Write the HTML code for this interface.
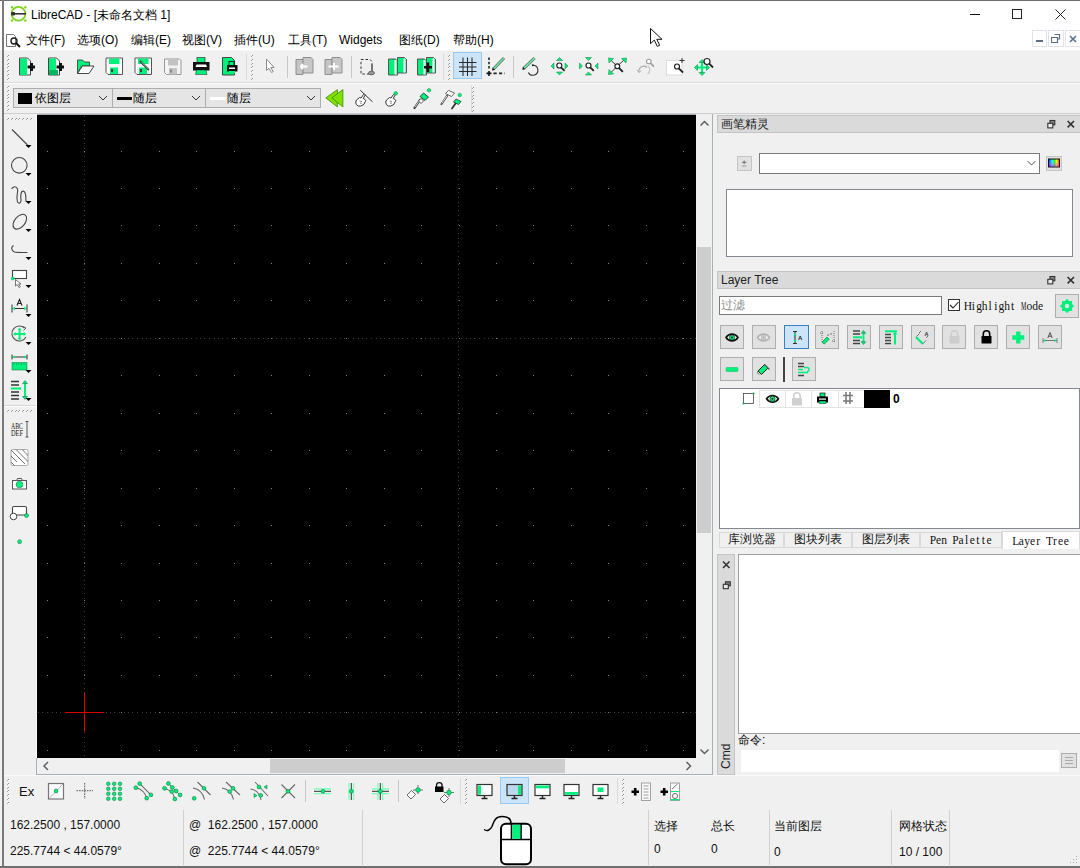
<!DOCTYPE html><html><head><meta charset="utf-8"><style>
*{margin:0;padding:0;box-sizing:border-box}
html,body{width:1080px;height:868px;overflow:hidden}
body{background:#f0f0f0;font-family:"Liberation Sans",sans-serif;font-size:12px;color:#000;position:relative}
.a{position:absolute;display:block}
.t{position:absolute;white-space:nowrap;line-height:16px}
</style></head><body>
<div class="a" style="left:0px;top:0px;width:1080px;height:50px;background:#fff"></div>
<div class="a" style="left:0px;top:0px;width:1080px;height:1px;background:#6e6e6e"></div>
<div class="a" style="left:2px;top:0px;width:2px;height:868px;background:#7a7a7a"></div>
<div class="a" style="left:0px;top:866px;width:1080px;height:2px;background:#6f6f6f"></div>
<svg class="a" style="left:9px;top:5px;" width="20" height="18" viewBox="0 0 20 18"><circle cx="9.5" cy="8.7" r="6.9" fill="none" stroke="#7ed321" stroke-width="1.8"/><circle cx="3" cy="2.3" r="1.2" fill="#7ed321"/><circle cx="16.3" cy="2.3" r="1.2" fill="#7ed321"/><circle cx="3" cy="15.5" r="1.2" fill="#7ed321"/><circle cx="16.3" cy="15.5" r="1.2" fill="#7ed321"/><rect x="2" y="8" width="15" height="1.6" fill="#333"/><rect x="2" y="7" width="4" height="3.6" rx="0.8" fill="#333"/></svg>
<div class="t" style="left:31px;top:7px;font-size:12px">LibreCAD - [未命名文档 1]</div>
<div class="a" style="left:970px;top:14px;width:10px;height:1px;background:#111"></div>
<div class="a" style="left:1012px;top:9px;width:10px;height:10px;border:1px solid #222"></div>
<svg class="a" style="left:1055px;top:9px;" width="11" height="11" viewBox="0 0 11 11"><path d="M0.5 0.5L10.5 10.5M10.5 0.5L0.5 10.5" stroke="#222" stroke-width="1"/></svg>
<svg class="a" style="left:5px;top:33px;" width="18" height="15" viewBox="0 0 18 15"><path d="M1.5 1.5h7l2 2v10h-9z" fill="#fff" stroke="#777"/><circle cx="9" cy="8" r="3" fill="none" stroke="#222" stroke-width="1.4"/><path d="M11 10l4 4" stroke="#111" stroke-width="2"/></svg>
<div class="t" style="left:26px;top:32px;font-size:12px">文件(F)</div>
<div class="t" style="left:77px;top:32px;font-size:12px">选项(O)</div>
<div class="t" style="left:131px;top:32px;font-size:12px">编辑(E)</div>
<div class="t" style="left:182px;top:32px;font-size:12px">视图(V)</div>
<div class="t" style="left:234px;top:32px;font-size:12px">插件(U)</div>
<div class="t" style="left:288px;top:32px;font-size:12px">工具(T)</div>
<div class="t" style="left:339px;top:32px;font-size:12px">Widgets</div>
<div class="t" style="left:399px;top:32px;font-size:12px">图纸(D)</div>
<div class="t" style="left:453px;top:32px;font-size:12px">帮助(H)</div>
<div class="a" style="left:1032px;top:30px;width:15px;height:17px;border:1px solid #dfe3ea;background:#fff"></div>
<div class="a" style="left:1048px;top:30px;width:16px;height:17px;border:1px solid #dfe3ea;background:#fff"></div>
<div class="a" style="left:1065px;top:30px;width:16px;height:17px;border:1px solid #dfe3ea;background:#fff"></div>
<div class="a" style="left:1036px;top:40px;width:7px;height:2px;background:#5d6f88"></div>
<svg class="a" style="left:1051px;top:34px;" width="10" height="9" viewBox="0 0 10 9"><path d="M3.5 0.5h5v4.5h-2M0.5 3.5h6v5h-6z" fill="none" stroke="#5d6f88" stroke-width="1.2"/></svg>
<svg class="a" style="left:1069px;top:35px;" width="8" height="8" viewBox="0 0 8 8"><path d="M1 1L7 7M7 1L1 7" stroke="#5d6f88" stroke-width="1.6"/></svg>
<svg class="a" style="left:649px;top:27px;" width="16" height="22" viewBox="0 0 16 22"><path d="M1.5 1.5v15.2l3.8-3.6 3 6.3 2.4-1.1-2.9-6h5.2z" fill="#fff" stroke="#111" stroke-width="1"/></svg>
<div class="a" style="left:4px;top:50px;width:1076px;height:1px;background:#f7f7f7"></div>
<div class="a" style="left:4px;top:82px;width:1076px;height:1px;background:#dcdcdc"></div>
<div class="a" style="left:4px;top:83px;width:1076px;height:1px;background:#fbfbfb"></div>
<div class="a" style="left:4px;top:113px;width:1076px;height:1px;background:#cdcdcd"></div>
<svg class="a" style="left:7px;top:55px;" width="3" height="25" viewBox="0 0 3 25"><rect x="1" y="0" width="1" height="1" fill="#8c8c8c"/><rect x="0" y="1" width="1" height="1" fill="#a5a5a5"/><rect x="1" y="1" width="1" height="1" fill="#fff"/><rect x="1" y="4" width="1" height="1" fill="#8c8c8c"/><rect x="0" y="5" width="1" height="1" fill="#a5a5a5"/><rect x="1" y="5" width="1" height="1" fill="#fff"/><rect x="1" y="8" width="1" height="1" fill="#8c8c8c"/><rect x="0" y="9" width="1" height="1" fill="#a5a5a5"/><rect x="1" y="9" width="1" height="1" fill="#fff"/><rect x="1" y="11" width="1" height="1" fill="#8c8c8c"/><rect x="0" y="12" width="1" height="1" fill="#a5a5a5"/><rect x="1" y="12" width="1" height="1" fill="#fff"/><rect x="1" y="15" width="1" height="1" fill="#8c8c8c"/><rect x="0" y="16" width="1" height="1" fill="#a5a5a5"/><rect x="1" y="16" width="1" height="1" fill="#fff"/><rect x="1" y="19" width="1" height="1" fill="#8c8c8c"/><rect x="0" y="20" width="1" height="1" fill="#a5a5a5"/><rect x="1" y="20" width="1" height="1" fill="#fff"/><rect x="1" y="23" width="1" height="1" fill="#8c8c8c"/><rect x="0" y="24" width="1" height="1" fill="#a5a5a5"/><rect x="1" y="24" width="1" height="1" fill="#fff"/></svg>
<div class="a" style="left:246px;top:54px;width:1px;height:26px;background:#dadada"></div>
<svg class="a" style="left:251px;top:55px;" width="3" height="26" viewBox="0 0 3 26"><rect x="1" y="0" width="1" height="1" fill="#8c8c8c"/><rect x="0" y="1" width="1" height="1" fill="#a5a5a5"/><rect x="1" y="1" width="1" height="1" fill="#fff"/><rect x="1" y="4" width="1" height="1" fill="#8c8c8c"/><rect x="0" y="5" width="1" height="1" fill="#a5a5a5"/><rect x="1" y="5" width="1" height="1" fill="#fff"/><rect x="1" y="8" width="1" height="1" fill="#8c8c8c"/><rect x="0" y="9" width="1" height="1" fill="#a5a5a5"/><rect x="1" y="9" width="1" height="1" fill="#fff"/><rect x="1" y="11" width="1" height="1" fill="#8c8c8c"/><rect x="0" y="12" width="1" height="1" fill="#a5a5a5"/><rect x="1" y="12" width="1" height="1" fill="#fff"/><rect x="1" y="15" width="1" height="1" fill="#8c8c8c"/><rect x="0" y="16" width="1" height="1" fill="#a5a5a5"/><rect x="1" y="16" width="1" height="1" fill="#fff"/><rect x="1" y="19" width="1" height="1" fill="#8c8c8c"/><rect x="0" y="20" width="1" height="1" fill="#a5a5a5"/><rect x="1" y="20" width="1" height="1" fill="#fff"/><rect x="1" y="23" width="1" height="1" fill="#8c8c8c"/><rect x="0" y="24" width="1" height="1" fill="#a5a5a5"/><rect x="1" y="24" width="1" height="1" fill="#fff"/></svg>
<div class="a" style="left:443px;top:54px;width:1px;height:26px;background:#dadada"></div>
<svg class="a" style="left:448px;top:55px;" width="3" height="26" viewBox="0 0 3 26"><rect x="1" y="0" width="1" height="1" fill="#8c8c8c"/><rect x="0" y="1" width="1" height="1" fill="#a5a5a5"/><rect x="1" y="1" width="1" height="1" fill="#fff"/><rect x="1" y="4" width="1" height="1" fill="#8c8c8c"/><rect x="0" y="5" width="1" height="1" fill="#a5a5a5"/><rect x="1" y="5" width="1" height="1" fill="#fff"/><rect x="1" y="8" width="1" height="1" fill="#8c8c8c"/><rect x="0" y="9" width="1" height="1" fill="#a5a5a5"/><rect x="1" y="9" width="1" height="1" fill="#fff"/><rect x="1" y="11" width="1" height="1" fill="#8c8c8c"/><rect x="0" y="12" width="1" height="1" fill="#a5a5a5"/><rect x="1" y="12" width="1" height="1" fill="#fff"/><rect x="1" y="15" width="1" height="1" fill="#8c8c8c"/><rect x="0" y="16" width="1" height="1" fill="#a5a5a5"/><rect x="1" y="16" width="1" height="1" fill="#fff"/><rect x="1" y="19" width="1" height="1" fill="#8c8c8c"/><rect x="0" y="20" width="1" height="1" fill="#a5a5a5"/><rect x="1" y="20" width="1" height="1" fill="#fff"/><rect x="1" y="23" width="1" height="1" fill="#8c8c8c"/><rect x="0" y="24" width="1" height="1" fill="#a5a5a5"/><rect x="1" y="24" width="1" height="1" fill="#fff"/></svg>
<div class="a" style="left:287px;top:56px;width:1px;height:22px;background:#c8c8c8"></div>
<div class="a" style="left:351px;top:56px;width:1px;height:22px;background:#c8c8c8"></div>
<div class="a" style="left:513px;top:56px;width:1px;height:22px;background:#c8c8c8"></div>
<div class="a" style="left:453px;top:52px;width:29px;height:27px;background:#cce4f7;border:1px solid #99c9ef"></div>
<svg class="a" style="left:7px;top:86px;" width="3" height="25" viewBox="0 0 3 25"><rect x="1" y="0" width="1" height="1" fill="#8c8c8c"/><rect x="0" y="1" width="1" height="1" fill="#a5a5a5"/><rect x="1" y="1" width="1" height="1" fill="#fff"/><rect x="1" y="4" width="1" height="1" fill="#8c8c8c"/><rect x="0" y="5" width="1" height="1" fill="#a5a5a5"/><rect x="1" y="5" width="1" height="1" fill="#fff"/><rect x="1" y="8" width="1" height="1" fill="#8c8c8c"/><rect x="0" y="9" width="1" height="1" fill="#a5a5a5"/><rect x="1" y="9" width="1" height="1" fill="#fff"/><rect x="1" y="11" width="1" height="1" fill="#8c8c8c"/><rect x="0" y="12" width="1" height="1" fill="#a5a5a5"/><rect x="1" y="12" width="1" height="1" fill="#fff"/><rect x="1" y="15" width="1" height="1" fill="#8c8c8c"/><rect x="0" y="16" width="1" height="1" fill="#a5a5a5"/><rect x="1" y="16" width="1" height="1" fill="#fff"/><rect x="1" y="19" width="1" height="1" fill="#8c8c8c"/><rect x="0" y="20" width="1" height="1" fill="#a5a5a5"/><rect x="1" y="20" width="1" height="1" fill="#fff"/><rect x="1" y="23" width="1" height="1" fill="#8c8c8c"/><rect x="0" y="24" width="1" height="1" fill="#a5a5a5"/><rect x="1" y="24" width="1" height="1" fill="#fff"/></svg>
<div class="a" style="left:471px;top:85px;width:1px;height:27px;background:#dadada"></div>
<svg class="a" style="left:472px;top:87px;" width="3" height="26" viewBox="0 0 3 26"><rect x="1" y="0" width="1" height="1" fill="#8c8c8c"/><rect x="0" y="1" width="1" height="1" fill="#a5a5a5"/><rect x="1" y="1" width="1" height="1" fill="#fff"/><rect x="1" y="4" width="1" height="1" fill="#8c8c8c"/><rect x="0" y="5" width="1" height="1" fill="#a5a5a5"/><rect x="1" y="5" width="1" height="1" fill="#fff"/><rect x="1" y="8" width="1" height="1" fill="#8c8c8c"/><rect x="0" y="9" width="1" height="1" fill="#a5a5a5"/><rect x="1" y="9" width="1" height="1" fill="#fff"/><rect x="1" y="11" width="1" height="1" fill="#8c8c8c"/><rect x="0" y="12" width="1" height="1" fill="#a5a5a5"/><rect x="1" y="12" width="1" height="1" fill="#fff"/><rect x="1" y="15" width="1" height="1" fill="#8c8c8c"/><rect x="0" y="16" width="1" height="1" fill="#a5a5a5"/><rect x="1" y="16" width="1" height="1" fill="#fff"/><rect x="1" y="19" width="1" height="1" fill="#8c8c8c"/><rect x="0" y="20" width="1" height="1" fill="#a5a5a5"/><rect x="1" y="20" width="1" height="1" fill="#fff"/><rect x="1" y="23" width="1" height="1" fill="#8c8c8c"/><rect x="0" y="24" width="1" height="1" fill="#a5a5a5"/><rect x="1" y="24" width="1" height="1" fill="#fff"/></svg>
<div class="a" style="left:13px;top:88px;width:100px;height:20px;background:#e5e5e5;border:1px solid #adadad"></div>
<div class="a" style="left:112px;top:88px;width:94px;height:20px;background:#e5e5e5;border:1px solid #adadad"></div>
<div class="a" style="left:205px;top:88px;width:116px;height:20px;background:#e5e5e5;border:1px solid #adadad"></div>
<div class="a" style="left:18px;top:93px;width:14px;height:11px;background:#000"></div>
<div class="t" style="left:35px;top:89px;font-size:12px;line-height:18px">依图层</div>
<div class="a" style="left:117px;top:97px;width:15px;height:3px;background:#000"></div>
<div class="t" style="left:133px;top:89px;font-size:12px;line-height:18px">随层</div>
<div class="a" style="left:210px;top:97px;width:16px;height:3px;background:#fff"></div>
<div class="t" style="left:227px;top:89px;font-size:12px;line-height:18px">随层</div>
<div class="a" style="left:4px;top:114px;width:33px;height:644px;background:#f0f0f0"></div>
<div class="a" style="left:36px;top:114px;width:1px;height:644px;background:#fbfbfb"></div>
<svg class="a" style="left:7px;top:118px;" width="25" height="3" viewBox="0 0 25 3"><rect x="1" y="0" width="1" height="1" fill="#8c8c8c"/><rect x="0" y="1" width="1" height="1" fill="#a5a5a5"/><rect x="1" y="1" width="1" height="1" fill="#fff"/><rect x="5" y="0" width="1" height="1" fill="#8c8c8c"/><rect x="4" y="1" width="1" height="1" fill="#a5a5a5"/><rect x="5" y="1" width="1" height="1" fill="#fff"/><rect x="9" y="0" width="1" height="1" fill="#8c8c8c"/><rect x="8" y="1" width="1" height="1" fill="#a5a5a5"/><rect x="9" y="1" width="1" height="1" fill="#fff"/><rect x="12" y="0" width="1" height="1" fill="#8c8c8c"/><rect x="11" y="1" width="1" height="1" fill="#a5a5a5"/><rect x="12" y="1" width="1" height="1" fill="#fff"/><rect x="16" y="0" width="1" height="1" fill="#8c8c8c"/><rect x="15" y="1" width="1" height="1" fill="#a5a5a5"/><rect x="16" y="1" width="1" height="1" fill="#fff"/><rect x="20" y="0" width="1" height="1" fill="#8c8c8c"/><rect x="19" y="1" width="1" height="1" fill="#a5a5a5"/><rect x="20" y="1" width="1" height="1" fill="#fff"/><rect x="24" y="0" width="1" height="1" fill="#8c8c8c"/><rect x="23" y="1" width="1" height="1" fill="#a5a5a5"/><rect x="24" y="1" width="1" height="1" fill="#fff"/></svg>
<div class="a" style="left:4px;top:405px;width:32px;height:1px;background:#d5d5d5"></div>
<div class="a" style="left:4px;top:406px;width:32px;height:1px;background:#fff"></div>
<svg class="a" style="left:7px;top:410px;" width="25" height="3" viewBox="0 0 25 3"><rect x="1" y="0" width="1" height="1" fill="#8c8c8c"/><rect x="0" y="1" width="1" height="1" fill="#a5a5a5"/><rect x="1" y="1" width="1" height="1" fill="#fff"/><rect x="5" y="0" width="1" height="1" fill="#8c8c8c"/><rect x="4" y="1" width="1" height="1" fill="#a5a5a5"/><rect x="5" y="1" width="1" height="1" fill="#fff"/><rect x="9" y="0" width="1" height="1" fill="#8c8c8c"/><rect x="8" y="1" width="1" height="1" fill="#a5a5a5"/><rect x="9" y="1" width="1" height="1" fill="#fff"/><rect x="12" y="0" width="1" height="1" fill="#8c8c8c"/><rect x="11" y="1" width="1" height="1" fill="#a5a5a5"/><rect x="12" y="1" width="1" height="1" fill="#fff"/><rect x="16" y="0" width="1" height="1" fill="#8c8c8c"/><rect x="15" y="1" width="1" height="1" fill="#a5a5a5"/><rect x="16" y="1" width="1" height="1" fill="#fff"/><rect x="20" y="0" width="1" height="1" fill="#8c8c8c"/><rect x="19" y="1" width="1" height="1" fill="#a5a5a5"/><rect x="20" y="1" width="1" height="1" fill="#fff"/><rect x="24" y="0" width="1" height="1" fill="#8c8c8c"/><rect x="23" y="1" width="1" height="1" fill="#a5a5a5"/><rect x="24" y="1" width="1" height="1" fill="#fff"/></svg>
<div class="a" style="left:37px;top:114px;width:676px;height:1px;background:#a9afb8"></div>
<div class="a" style="left:37px;top:115px;width:659px;height:643px;background:#000"></div>
<div class="a" style="left:696px;top:114px;width:16px;height:644px;background:#f0f0f0"></div>
<div class="a" style="left:697px;top:247px;width:14px;height:286px;background:#cdcdcd"></div>
<div class="a" style="left:37px;top:758px;width:675px;height:16px;background:#f0f0f0"></div>
<div class="a" style="left:270px;top:759px;width:295px;height:14px;background:#cdcdcd"></div>
<div class="a" style="left:712px;top:114px;width:1px;height:661px;background:#a9afb8"></div>
<div class="a" style="left:36px;top:774px;width:677px;height:1px;background:#a9afb8"></div>
<div class="a" style="left:36px;top:758px;width:1px;height:17px;background:#a9afb8"></div>
<div class="a" style="left:4px;top:775px;width:1076px;height:1px;background:#fafafa"></div>
<svg class="a" style="left:7px;top:779px;" width="3" height="27" viewBox="0 0 3 27"><rect x="1" y="0" width="1" height="1" fill="#8c8c8c"/><rect x="0" y="1" width="1" height="1" fill="#a5a5a5"/><rect x="1" y="1" width="1" height="1" fill="#fff"/><rect x="1" y="4" width="1" height="1" fill="#8c8c8c"/><rect x="0" y="5" width="1" height="1" fill="#a5a5a5"/><rect x="1" y="5" width="1" height="1" fill="#fff"/><rect x="1" y="8" width="1" height="1" fill="#8c8c8c"/><rect x="0" y="9" width="1" height="1" fill="#a5a5a5"/><rect x="1" y="9" width="1" height="1" fill="#fff"/><rect x="1" y="11" width="1" height="1" fill="#8c8c8c"/><rect x="0" y="12" width="1" height="1" fill="#a5a5a5"/><rect x="1" y="12" width="1" height="1" fill="#fff"/><rect x="1" y="15" width="1" height="1" fill="#8c8c8c"/><rect x="0" y="16" width="1" height="1" fill="#a5a5a5"/><rect x="1" y="16" width="1" height="1" fill="#fff"/><rect x="1" y="19" width="1" height="1" fill="#8c8c8c"/><rect x="0" y="20" width="1" height="1" fill="#a5a5a5"/><rect x="1" y="20" width="1" height="1" fill="#fff"/><rect x="1" y="23" width="1" height="1" fill="#8c8c8c"/><rect x="0" y="24" width="1" height="1" fill="#a5a5a5"/><rect x="1" y="24" width="1" height="1" fill="#fff"/></svg>
<div class="t" style="left:19px;top:783px;font-size:13px;line-height:18px;color:#111">Ex</div>
<div class="a" style="left:305px;top:780px;width:1px;height:22px;background:#c8c8c8"></div>
<div class="a" style="left:398px;top:780px;width:1px;height:22px;background:#c8c8c8"></div>
<div class="a" style="left:460px;top:778px;width:1px;height:26px;background:#dadada"></div>
<svg class="a" style="left:465px;top:779px;" width="3" height="27" viewBox="0 0 3 27"><rect x="1" y="0" width="1" height="1" fill="#8c8c8c"/><rect x="0" y="1" width="1" height="1" fill="#a5a5a5"/><rect x="1" y="1" width="1" height="1" fill="#fff"/><rect x="1" y="4" width="1" height="1" fill="#8c8c8c"/><rect x="0" y="5" width="1" height="1" fill="#a5a5a5"/><rect x="1" y="5" width="1" height="1" fill="#fff"/><rect x="1" y="8" width="1" height="1" fill="#8c8c8c"/><rect x="0" y="9" width="1" height="1" fill="#a5a5a5"/><rect x="1" y="9" width="1" height="1" fill="#fff"/><rect x="1" y="11" width="1" height="1" fill="#8c8c8c"/><rect x="0" y="12" width="1" height="1" fill="#a5a5a5"/><rect x="1" y="12" width="1" height="1" fill="#fff"/><rect x="1" y="15" width="1" height="1" fill="#8c8c8c"/><rect x="0" y="16" width="1" height="1" fill="#a5a5a5"/><rect x="1" y="16" width="1" height="1" fill="#fff"/><rect x="1" y="19" width="1" height="1" fill="#8c8c8c"/><rect x="0" y="20" width="1" height="1" fill="#a5a5a5"/><rect x="1" y="20" width="1" height="1" fill="#fff"/><rect x="1" y="23" width="1" height="1" fill="#8c8c8c"/><rect x="0" y="24" width="1" height="1" fill="#a5a5a5"/><rect x="1" y="24" width="1" height="1" fill="#fff"/></svg>
<div class="a" style="left:500px;top:777px;width:29px;height:27px;background:#cce4f7;border:1px solid #99c9ef"></div>
<div class="a" style="left:617px;top:778px;width:1px;height:26px;background:#dadada"></div>
<svg class="a" style="left:622px;top:779px;" width="3" height="27" viewBox="0 0 3 27"><rect x="1" y="0" width="1" height="1" fill="#8c8c8c"/><rect x="0" y="1" width="1" height="1" fill="#a5a5a5"/><rect x="1" y="1" width="1" height="1" fill="#fff"/><rect x="1" y="4" width="1" height="1" fill="#8c8c8c"/><rect x="0" y="5" width="1" height="1" fill="#a5a5a5"/><rect x="1" y="5" width="1" height="1" fill="#fff"/><rect x="1" y="8" width="1" height="1" fill="#8c8c8c"/><rect x="0" y="9" width="1" height="1" fill="#a5a5a5"/><rect x="1" y="9" width="1" height="1" fill="#fff"/><rect x="1" y="11" width="1" height="1" fill="#8c8c8c"/><rect x="0" y="12" width="1" height="1" fill="#a5a5a5"/><rect x="1" y="12" width="1" height="1" fill="#fff"/><rect x="1" y="15" width="1" height="1" fill="#8c8c8c"/><rect x="0" y="16" width="1" height="1" fill="#a5a5a5"/><rect x="1" y="16" width="1" height="1" fill="#fff"/><rect x="1" y="19" width="1" height="1" fill="#8c8c8c"/><rect x="0" y="20" width="1" height="1" fill="#a5a5a5"/><rect x="1" y="20" width="1" height="1" fill="#fff"/><rect x="1" y="23" width="1" height="1" fill="#8c8c8c"/><rect x="0" y="24" width="1" height="1" fill="#a5a5a5"/><rect x="1" y="24" width="1" height="1" fill="#fff"/></svg>
<div class="t" style="left:10px;top:817px;font-size:12px;line-height:16px;color:#111">162.2500 , 157.0000</div>
<div class="t" style="left:10px;top:843px;font-size:12px;line-height:16px;color:#111">225.7744 &lt; 44.0579°</div>
<div class="a" style="left:183px;top:810px;width:1px;height:55px;background:#d0d0d0"></div>
<div class="t" style="left:189px;top:817px;font-size:12px;line-height:16px;color:#111">@&nbsp; 162.2500 , 157.0000</div>
<div class="t" style="left:189px;top:843px;font-size:12px;line-height:16px;color:#111">@&nbsp; 225.7744 &lt; 44.0579°</div>
<div class="a" style="left:362px;top:810px;width:1px;height:55px;background:#d0d0d0"></div>
<div class="a" style="left:648px;top:810px;width:1px;height:55px;background:#d0d0d0"></div>
<div class="a" style="left:769px;top:810px;width:1px;height:55px;background:#d0d0d0"></div>
<div class="a" style="left:891px;top:810px;width:1px;height:55px;background:#d0d0d0"></div>
<div class="a" style="left:949px;top:810px;width:1px;height:55px;background:#d0d0d0"></div>
<div class="t" style="left:654px;top:818px;font-size:12px;line-height:16px;color:#111">选择</div>
<div class="t" style="left:654px;top:841px;font-size:12px;line-height:16px;color:#111">0</div>
<div class="t" style="left:711px;top:818px;font-size:12px;line-height:16px;color:#111">总长</div>
<div class="t" style="left:711px;top:841px;font-size:12px;line-height:16px;color:#111">0</div>
<div class="t" style="left:774px;top:818px;font-size:12px;line-height:16px;color:#111">当前图层</div>
<div class="t" style="left:774px;top:844px;font-size:12px;line-height:16px;color:#111">0</div>
<div class="t" style="left:899px;top:818px;font-size:12px;line-height:16px;color:#111">网格状态</div>
<div class="t" style="left:899px;top:844px;font-size:12px;line-height:16px;color:#111">10 / 100</div>
<div class="a" style="left:717px;top:115px;width:363px;height:18px;background:#dadada;border:1px solid #c4c4c4;border-right:none"></div>
<div class="t" style="left:721px;top:116px;font-size:12px;line-height:16px;color:#222">画笔精灵</div>
<div class="a" style="left:737px;top:156px;width:15px;height:15px;background:#e1e1e1;border:1px solid #c4c4c4"></div>
<div class="a" style="left:759px;top:153px;width:281px;height:21px;background:#fff;border:1px solid #7a7a7a"></div>
<div class="a" style="left:1046px;top:156px;width:16px;height:15px;background:#e1e1e1;border:1px solid #c4c4c4"></div>
<div class="a" style="left:726px;top:189px;width:347px;height:68px;background:#fff;border:1px solid #828790"></div>
<div class="a" style="left:717px;top:271px;width:363px;height:18px;background:#dadada;border:1px solid #c4c4c4;border-right:none"></div>
<div class="t" style="left:721px;top:272px;font-size:12px;line-height:16px;color:#222">Layer Tree</div>
<div class="a" style="left:719px;top:296px;width:223px;height:19px;background:#fff;border:1px solid #7a7a7a"></div>
<div class="t" style="left:721px;top:298px;font-size:12px;line-height:15px;color:#8a8a8a">过滤</div>
<div class="a" style="left:948px;top:299px;width:12px;height:12px;background:#fff;border:1px solid #333"></div>
<div class="a" style="left:1055px;top:294px;width:24px;height:24px;background:#e1e1e1;border:1px solid #adadad"></div>
<div class="a" style="left:720px;top:325px;width:24px;height:24px;background:#e1e1e1;border:1px solid #adadad"></div>
<div class="a" style="left:752px;top:325px;width:24px;height:24px;background:#e1e1e1;border:1px solid #adadad"></div>
<div class="a" style="left:784px;top:325px;width:25px;height:24px;background:#cce4f7;border:1px solid #3d7fc4"></div>
<div class="a" style="left:815px;top:325px;width:24px;height:24px;background:#e1e1e1;border:1px solid #adadad"></div>
<div class="a" style="left:847px;top:325px;width:24px;height:24px;background:#e1e1e1;border:1px solid #adadad"></div>
<div class="a" style="left:879px;top:325px;width:24px;height:24px;background:#e1e1e1;border:1px solid #adadad"></div>
<div class="a" style="left:911px;top:325px;width:24px;height:24px;background:#e1e1e1;border:1px solid #adadad"></div>
<div class="a" style="left:942px;top:325px;width:24px;height:24px;background:#e1e1e1;border:1px solid #adadad"></div>
<div class="a" style="left:974px;top:325px;width:24px;height:24px;background:#e1e1e1;border:1px solid #adadad"></div>
<div class="a" style="left:1006px;top:325px;width:24px;height:24px;background:#e1e1e1;border:1px solid #adadad"></div>
<div class="a" style="left:1038px;top:325px;width:24px;height:24px;background:#e1e1e1;border:1px solid #adadad"></div>
<div class="a" style="left:720px;top:357px;width:24px;height:24px;background:#e1e1e1;border:1px solid #adadad"></div>
<div class="a" style="left:752px;top:357px;width:24px;height:24px;background:#e1e1e1;border:1px solid #adadad"></div>
<div class="a" style="left:792px;top:357px;width:24px;height:24px;background:#e1e1e1;border:1px solid #adadad"></div>
<div class="a" style="left:783px;top:357px;width:2px;height:25px;background:#444"></div>
<div class="a" style="left:719px;top:388px;width:361px;height:141px;background:#fff;border:1px solid #828790;border-right:1px solid #828790"></div>
<div class="a" style="left:759px;top:390px;width:105px;height:18px;border:1px solid #e3e3e3;border-right:none"></div>
<div class="a" style="left:785px;top:390px;width:1px;height:18px;background:#e3e3e3"></div>
<div class="a" style="left:811px;top:390px;width:1px;height:18px;background:#e3e3e3"></div>
<div class="a" style="left:838px;top:390px;width:1px;height:18px;background:#e3e3e3"></div>
<div class="a" style="left:864px;top:390px;width:26px;height:18px;background:#000"></div>
<div class="t" style="left:893px;top:391px;font-size:12px;line-height:16px;font-weight:bold">0</div>
<div class="a" style="left:719px;top:531px;width:361px;height:17px;background:#f0f0f0"></div>
<div class="a" style="left:719px;top:532px;width:65px;height:16px;background:#f0f0f0;border:1px solid #d9d9d9"></div>
<div class="t" style="left:719px;top:532px;font-size:12px;line-height:15px;color:#111;text-align:center;width:65px">库浏览器</div>
<div class="a" style="left:784px;top:532px;width:68px;height:16px;background:#f0f0f0;border:1px solid #d9d9d9"></div>
<div class="t" style="left:784px;top:532px;font-size:12px;line-height:15px;color:#111;text-align:center;width:68px">图块列表</div>
<div class="a" style="left:852px;top:532px;width:68px;height:16px;background:#f0f0f0;border:1px solid #d9d9d9"></div>
<div class="t" style="left:852px;top:532px;font-size:12px;line-height:15px;color:#111;text-align:center;width:68px">图层列表</div>
<div class="a" style="left:920px;top:532px;width:82px;height:16px;background:#f0f0f0;border:1px solid #d9d9d9"></div>
<div class="a" style="left:1002px;top:531px;width:78px;height:18px;background:#fff;border:1px solid #d9d9d9;border-bottom:none"></div>
<div class="a" style="left:717px;top:554px;width:18px;height:221px;background:#dadada;border:1px solid #c4c4c4"></div>
<div class="t" style="left:719px;top:769px;font-size:12px;line-height:14px;color:#222;transform:rotate(-90deg);transform-origin:0 0">Cmd</div>
<div class="a" style="left:738px;top:554px;width:342px;height:180px;background:#fff;border:1px solid #a0a0a0;border-right:none"></div>
<div class="t" style="left:738px;top:733px;font-size:12px;line-height:15px;color:#111">命令:</div>
<div class="a" style="left:741px;top:750px;width:318px;height:22px;background:#fff"></div>
<div class="a" style="left:1061px;top:753px;width:16px;height:15px;background:#e1e1e1;border:1px solid #adadad"></div>
<svg class="a" style="left:0;top:0;pointer-events:none" width="1080" height="868" viewBox="0 0 1080 868"><path d="M19.5 58h8l3 3v14h-11z" fill="#fff" stroke="#444" stroke-width="1"/><rect x="20" y="58.5" width="7" height="16.5" fill="#00f07c"/><path d="M27.5 65.5h7.5v3h-7.5zM30 63h3v8h-3z" fill="#111"/><path d="M48.5 58h8l3 3v14h-11z" fill="#fff" stroke="#444" stroke-width="1"/><rect x="49" y="58.5" width="7" height="16.5" fill="#00f07c"/><rect x="49" y="70" width="9" height="5" fill="#0bb45e"/><path d="M56.5 65.5h7.5v3h-7.5zM59 63h3v8h-3z" fill="#111"/><path d="M77.5 60h5l2 2h5v4h-8l-4 7.5z" fill="#00f07c" stroke="#333" stroke-width="0.8"/><path d="M77.5 73.5l5-7.5h11.5l-5 7.5z" fill="#fff" stroke="#444" stroke-width="1"/><path d="M106 58h16.5v16.5h-14.5l-2-2z" fill="#fff" stroke="#555" stroke-width="1"/><rect x="109" y="58.5" width="10.5" height="5.5" fill="#00f07c"/><rect x="110" y="67.5" width="8" height="6.5" fill="#00f07c"/><rect x="111" y="69" width="2" height="3" fill="#444"/><path d="M135 58h16.5v16.5h-14.5l-2-2z" fill="#fff" stroke="#555" stroke-width="1"/><rect x="138" y="58.5" width="10.5" height="5.5" fill="#00f07c"/><rect x="139" y="67.5" width="8" height="6.5" fill="#00f07c"/><rect x="140" y="69" width="2" height="3" fill="#444"/><path d="M140 61l9 9" stroke="#333" stroke-width="2"/><path d="M141 61.5l8 8" stroke="#ddd" stroke-width="0.8"/><path d="M164.5 59h15l1.5 1.5v14h-14.5l-2-2z" fill="#f4f4f4" stroke="#999" stroke-width="1"/><rect x="168" y="59.5" width="10" height="6" fill="#c2c2c2"/><rect x="169" y="68" width="8" height="6.5" fill="#c2c2c2"/><rect x="170" y="69.5" width="2" height="3" fill="#888"/><rect x="197" y="57.5" width="8" height="5" fill="#00f07c" stroke="#222" stroke-width="0.6"/><rect x="193" y="62" width="16.5" height="8.5" fill="#111"/><path d="M196.5 64.5h9.5l1 2.5h-11.5z" fill="#fff"/><path d="M196.5 70h9.5l1 4.5h-11.5z" fill="#00f07c" stroke="#222" stroke-width="0.5"/><path d="M222.5 57.5h9l3 3v14.5h-12z" fill="#00f07c" stroke="#444" stroke-width="1"/><rect x="229" y="61.5" width="5" height="4" fill="#00f07c" stroke="#111" stroke-width="0.8"/><rect x="227" y="65" width="10.5" height="6.5" fill="#111"/><rect x="229" y="67.5" width="6" height="1.5" fill="#fff"/><rect x="229" y="71" width="6" height="2.5" fill="#00f07c"/><path d="M266.5 59v11.5l2.5-2.2 2.5 4.2 1.7-0.9-2.4-4.1h3.3z" fill="#fff" stroke="#8a8a8a" stroke-width="1"/><path d="M296 59.5h7v15h-7z" fill="#c4c4c4" stroke="#8e8e8e"/><path d="M303 57.5h8l2 2v13.5h-10z" fill="#c8c8c8" stroke="#8e8e8e"/><path d="M300.5 66.5h7M300.5 66.5l2.5-2.5M300.5 66.5l2.5 2.5" stroke="#fff" stroke-width="2"/><path d="M325 59.5h7v15h-7z" fill="#c4c4c4" stroke="#8e8e8e"/><path d="M332 57.5h8l2 2v13.5h-10z" fill="#c8c8c8" stroke="#8e8e8e"/><path d="M328.5 66.5h10M334 63v7" stroke="#fff" stroke-width="2"/><path d="M361 59.5h9l2 2v12.5h-11z" fill="none" stroke="#333" stroke-width="1" stroke-dasharray="2.5 2"/><path d="M372 64v7" stroke="#777" stroke-width="2"/><ellipse cx="371.5" cy="73" rx="3" ry="1.8" fill="#999" stroke="#444" stroke-width="0.7"/><path d="M397.5 57.5h7l2 2v13.5h-9z" fill="#00f07c" stroke="#555"/><rect x="403.5" y="58.5" width="2" height="14" fill="#fff"/><path d="M388.5 59h7l2 2v14h-9z" fill="#00f07c" stroke="#555"/><rect x="394.5" y="60" width="2" height="14.5" fill="#fff"/><path d="M426.5 57.5h7l2 2v13.5h-9z" fill="#00f07c" stroke="#555"/><rect x="432.5" y="58.5" width="2" height="14" fill="#fff"/><path d="M417.5 59h7l2 2v14h-9z" fill="#00f07c" stroke="#555"/><rect x="423.5" y="60" width="2" height="14.5" fill="#fff"/><path d="M424 66h8v2.6h-8zM426.7 62.5h2.6v9.5h-2.6z" fill="#111"/><path d="M459 62.5h17.5M459 67h17.5M459 71.5h17.5M463 57.5v18.5M467.5 57.5v18.5M472 57.5v18.5" stroke="#2a2a2a" stroke-width="1.05"/><path d="M489 57.5v11" stroke="#333" stroke-width="1.7" stroke-dasharray="2.6 1.6"/><path d="M493.5 73.4h11.5" stroke="#222" stroke-width="1.6" stroke-dasharray="3.2 2.3"/><path d="M486.5 73.4h5M489 71v5" stroke="#111" stroke-width="1.6"/><path d="M493.5 69.0L504 58" stroke="#666" stroke-width="3" stroke-linecap="butt"/><path d="M493.5 69.0L504 58" stroke="#5ef0a0" stroke-width="1.6"/><path d="M492 70.5l0.6-3 2.4 2.4z" fill="#111"/><path d="M523.8 68.3L534.6 58" stroke="#666" stroke-width="3" stroke-linecap="butt"/><path d="M523.8 68.3L534.6 58" stroke="#5ef0a0" stroke-width="1.6"/><path d="M522.3 69.8l0.6-3 2.4 2.4z" fill="#111"/><path d="M533 65.2a5 5 0 1 1-4.6 7.2" fill="none" stroke="#333" stroke-width="1.1"/><circle cx="532.8" cy="65.3" r="1" fill="#222"/><path d="M559.5 57.5L556.5 60.5L562.5 60.5z" fill="#00f07c" stroke="#0a7d40" stroke-width="0.5"/><path d="M559.5 75L556.5 72L562.5 72z" fill="#00f07c" stroke="#0a7d40" stroke-width="0.5"/><path d="M551 66L554 63L554 69z" fill="#00f07c" stroke="#0a7d40" stroke-width="0.5"/><path d="M568 66L565 63L565 69z" fill="#00f07c" stroke="#0a7d40" stroke-width="0.5"/><circle cx="559.3" cy="65.5" r="2.5" fill="#fff" stroke="#222" stroke-width="1.2"/><path d="M561.0677499999999 67.26775L564.6032499999999 70.80325" stroke="#222" stroke-width="1.8"/><path d="M588.5 60.5L585.5 57.5L591.5 57.5z" fill="#00f07c" stroke="#0a7d40" stroke-width="0.5"/><path d="M588.5 72L585.5 75L591.5 75z" fill="#00f07c" stroke="#0a7d40" stroke-width="0.5"/><path d="M582.5 66L579.5 63L579.5 69z" fill="#00f07c" stroke="#0a7d40" stroke-width="0.5"/><path d="M595 66L598 63L598 69z" fill="#00f07c" stroke="#0a7d40" stroke-width="0.5"/><circle cx="588.5" cy="65.5" r="2.5" fill="#fff" stroke="#222" stroke-width="1.2"/><path d="M590.26775 67.26775L593.8032499999999 70.80325" stroke="#222" stroke-width="1.8"/><path d="M610 59.5l7 6.5M624.5 59.5l-7 6.5M610 73.5l5.5-5.5" stroke="#222" stroke-width="0.9"/><path d="M608.5 58L613.5 58.5L609 63z" fill="#00f07c" stroke="#0a7d40" stroke-width="0.5"/><path d="M626.5 58L621.5 58.5L626 63z" fill="#00f07c" stroke="#0a7d40" stroke-width="0.5"/><path d="M608.5 74.5L609 69.5L613.5 74z" fill="#00f07c" stroke="#0a7d40" stroke-width="0.5"/><circle cx="617.3" cy="66.3" r="2.4" fill="#fff" stroke="#222" stroke-width="1.2"/><path d="M618.99704 67.99704L622.88609 71.88609" stroke="#222" stroke-width="1.8"/><path d="M647 67.5a4.8 4.8 0 0 0-8 3" fill="none" stroke="#a9a9a9" stroke-width="1.2"/><path d="M648 66a5 5 0 0 1-0.5 8" fill="none" stroke="#c8c8c8" stroke-width="1.2"/><path d="M637.5 70l1.5 2.5 2-2" fill="none" stroke="#9a9a9a" stroke-width="1"/><circle cx="648.8" cy="61.5" r="2.3" fill="#fff" stroke="#9c9c9c" stroke-width="1.1"/><path d="M650.42633 63.12633L653.96183 66.66183000000001" stroke="#9c9c9c" stroke-width="1.6"/><rect x="666.5" y="60.5" width="15.5" height="14.5" fill="#fff" stroke="#dcdcdc"/><path d="M682 58v5M679.5 60.5h5" stroke="#333" stroke-width="1"/><circle cx="677" cy="66.5" r="2.5" fill="#fff" stroke="#222" stroke-width="1.2"/><path d="M678.76775 68.26775L683.01035 72.51035" stroke="#222" stroke-width="1.8"/><path d="M702 61v13M695.5 67.5h13" stroke="#00f07c" stroke-width="2.2"/><path d="M702 59.5L699 62.5L705 62.5z" fill="#00f07c" stroke="#0a7d40" stroke-width="0.5"/><path d="M702 75.5L699 72.5L705 72.5z" fill="#00f07c" stroke="#0a7d40" stroke-width="0.5"/><path d="M694.5 67.5L697.5 64.5L697.5 70.5z" fill="#00f07c" stroke="#0a7d40" stroke-width="0.5"/><path d="M709.5 67.5L706.5 64.5L706.5 70.5z" fill="#00f07c" stroke="#0a7d40" stroke-width="0.5"/><circle cx="707" cy="61.5" r="3" fill="#fff" fill-opacity="0.6" stroke="#222" stroke-width="1.2"/><path d="M709.2 63.7l3.8 3.8" stroke="#222" stroke-width="1.8"/><path d="M99 96l4 4 4-4" fill="none" stroke="#333" stroke-width="1"/><path d="M192 96l4 4 4-4" fill="none" stroke="#333" stroke-width="1"/><path d="M307 96l4 4 4-4" fill="none" stroke="#333" stroke-width="1"/><path d="M325.8 97.9L337.4 89.6V106.9z" fill="#80e000" stroke="#3f8a00" stroke-width="0.8" stroke-linejoin="round"/><path d="M331.8 97.9L342.9 89.6V106.9z" fill="#80e000" stroke="#3f8a00" stroke-width="0.8" stroke-linejoin="round"/><path d="M360.3 90.3L372.5 101.8" stroke="#333" stroke-width="1"/><path d="M356.5 100.0l3-2.5 1.5 0.5 2.5-3.5c0.8-0.8 1.8-0.3 1.5 0.7l-1.8 3.3 1.8 1c0.8 0.5 0.8 1.3 0.3 2l-1.5 3-3 1.5h-2.5l-2-1.5-0.6-2.5z" fill="#fff" stroke="#222" stroke-width="0.9" stroke-linejoin="round"/><path d="M359.5 101.0l2.5 0.6M360.0 103.0l2 0.3" stroke="#444" stroke-width="0.6"/><path d="M386.5 100.0l3-2.5 1.5 0.5 2.5-3.5c0.8-0.8 1.8-0.3 1.5 0.7l-1.8 3.3 1.8 1c0.8 0.5 0.8 1.3 0.3 2l-1.5 3-3 1.5h-2.5l-2-1.5-0.6-2.5z" fill="#fff" stroke="#222" stroke-width="0.9" stroke-linejoin="round"/><path d="M389.5 101.0l2.5 0.6M390.0 103.0l2 0.3" stroke="#444" stroke-width="0.6"/><circle cx="395.7" cy="93.4" r="1.8" fill="#00f07c" stroke="#1a7a30" stroke-width="0.5"/><path d="M414.5 108l5.5-8" stroke="#333" stroke-width="2.2" stroke-linecap="round"/><path d="M414.8 107.3l5-7.3" stroke="#fff" stroke-width="0.8"/><path d="M418.5 101l2.5-2.5 2.5 2.5-2.5 2.5z" fill="#fff" stroke="#333" stroke-width="0.8"/><path d="M420 96.5l3.5-3.5 5 4-3.5 3.5z" fill="#00f07c" stroke="#222" stroke-width="0.8"/><circle cx="429" cy="90.3" r="1.8" fill="#00f07c" stroke="#1a7a30" stroke-width="0.4"/><path d="M441.5 104l5.5-8" stroke="#555" stroke-width="2.2" stroke-linecap="round"/><path d="M441.8 103.3l5-7.3" stroke="#fff" stroke-width="0.8"/><path d="M445.5 93.5l3-3 6 2.5-3 3.5z" fill="#fff" stroke="#555" stroke-width="0.9"/><path d="M452 108.5l3.5-5" stroke="#333" stroke-width="1.8" stroke-linecap="round"/><path d="M453.5 102l2.5-3 5 2.5-2.5 3z" fill="#00f07c" stroke="#222" stroke-width="0.7"/><circle cx="459.7" cy="95" r="1.8" fill="#00f07c" stroke="#1a7a30" stroke-width="0.4"/><path d="M12 129.5L27.5 145" stroke="#444" stroke-width="1.1"/><path d="M25.5 145.0h6l-3 3z" fill="#000"/><circle cx="19.3" cy="165.3" r="7.8" fill="none" stroke="#444" stroke-width="1.1"/><path d="M25.5 173.0h6l-3 3z" fill="#000"/><path d="M11.5 189c2-3 5-3 6 0s-2 8 0 13c1.5 2 3.5 1 3.5-1.5 0-3-1-7 1-9 1.5-1 3 0 3.5 3 0.5 2 0.5 4 0.5 7" fill="none" stroke="#444" stroke-width="1.1"/><path d="M25.5 201.0h6l-3 3z" fill="#000"/><ellipse cx="19.8" cy="221.7" rx="5.2" ry="8.6" transform="rotate(40 19.8 221.7)" fill="none" stroke="#444" stroke-width="1.1"/><path d="M25.5 229.0h6l-3 3z" fill="#000"/><path d="M13.5 245.5c-2.5 1.5-2.5 5 1 6.5 1.5 0.5 3 0.5 13 0.5" fill="none" stroke="#444" stroke-width="1.1"/><path d="M25.5 257.0h6l-3 3z" fill="#000"/><rect x="12.5" y="270.5" width="14" height="8" fill="#fff" stroke="#444" stroke-width="1.1"/><path d="M15.5 279.5v6.5l1.6-1.5 2 3 1.2-0.7-1.7-2.8h2.4z" fill="#fff" stroke="#555" stroke-width="0.8"/><circle cx="12.7" cy="278.5" r="1.6" fill="#00f07c" stroke="#1a6" stroke-width="0.4"/><path d="M25.5 285.0h6l-3 3z" fill="#000"/><path d="M17 305.5l2.5-6 2.5 6M18 303.5h3" fill="none" stroke="#222" stroke-width="1.1"/><path d="M12 304.5v8M27 304.5v8M12.5 308.5h14" stroke="#333" stroke-width="1"/><path d="M12.5 308.5l2.5-2v4zM26.5 308.5l-2.5-2v4z" fill="#00f07c"/><path d="M25.5 314.0h6l-3 3z" fill="#000"/><path d="M24.5 328a7.5 7.5 0 1 0 1.5 9" fill="none" stroke="#555" stroke-width="1.1"/><path d="M23 326.5l3 1.5-2.5 2.5" fill="none" stroke="#555" stroke-width="0.9"/><path d="M19.6 329v10M14.6 334h10" stroke="#00f07c" stroke-width="2"/><path d="M19.6 327.5l-2 2.5h4zM19.6 340.5l-2-2.5h4zM13 334l2.5-2v4zM26.2 334l-2.5-2v4z" fill="#00f07c"/><path d="M25.5 342.0h6l-3 3z" fill="#000"/><path d="M12 354.5v5M27 354.5v5M12.5 357h14" stroke="#333" stroke-width="1"/><path d="M12.5 357l2.5-1.6v3.2zM26.5 357l-2.5-1.6v3.2z" fill="#00f07c"/><rect x="12" y="362.5" width="15" height="7.5" fill="#00f07c" stroke="#1a8a4a" stroke-width="0.6"/><path d="M14 363v2M16.5 363v2.5M19 363v2M21.5 363v2.5M24 363v2" stroke="#0a5" stroke-width="0.7"/><path d="M25.5 370.0h6l-3 3z" fill="#000"/><path d="M11 381.5h8M11 385h8M11 392h8M11 395.5h8M11 399h8" stroke="#333" stroke-width="1.5"/><path d="M11 388.5h10" stroke="#00f07c" stroke-width="2.2"/><path d="M25 382.5v15" stroke="#00f07c" stroke-width="2"/><path d="M25 380.5l-2.5 3h5zM25 399.5l-2.5-3h5z" fill="#00f07c" stroke="#0a6a38" stroke-width="0.5"/><path d="M25.5 398.0h6l-3 3z" fill="#000"/><text x="11" y="428.5" font-family="Liberation Serif" font-size="7.5" fill="#111" textLength="12" lengthAdjust="spacingAndGlyphs">ABC</text><text x="11" y="436" font-family="Liberation Serif" font-size="7.5" fill="#111" textLength="12" lengthAdjust="spacingAndGlyphs">DEF</text><path d="M25.5 421.5h3M27 421.5v15.5M25.5 437h3" stroke="#444" stroke-width="0.9"/><defs><clipPath id="hc"><rect x="11" y="449.5" width="17" height="16"/></clipPath></defs><rect x="11" y="449.5" width="17" height="16" rx="1.5" fill="#fff" stroke="#aaa" stroke-width="1"/><g clip-path="url(#hc)" stroke="#666" stroke-width="0.9"><path d="M11 456l6 6M11 450l14 14M16 449.5l13 13M22 449.5l7 7M11 462l4 4"/></g><rect x="12.5" y="480.5" width="14" height="8.5" fill="#fff" stroke="#555" stroke-width="1"/><path d="M16.5 480.5l1-2h4l1 2" fill="none" stroke="#555"/><circle cx="19.5" cy="484.5" r="3.3" fill="#00f07c" stroke="#0a6a38" stroke-width="0.5"/><rect x="12.5" y="506.5" width="14" height="8.5" rx="1.5" fill="#fff" stroke="#444" stroke-width="1.1"/><circle cx="13.5" cy="516.5" r="3.3" fill="#fff" stroke="#444" stroke-width="1"/><circle cx="26.5" cy="515.5" r="2" fill="#00f07c" stroke="#0a6a38" stroke-width="0.5"/><circle cx="19.6" cy="541.7" r="2" fill="#00f07c" stroke="#0a6a38" stroke-width="0.5"/><path d="M47 151h1v1h-1zM47 188h1v1h-1zM47 225h1v1h-1zM47 263h1v1h-1zM47 300h1v1h-1zM47 338h1v1h-1zM47 375h1v1h-1zM47 413h1v1h-1zM47 450h1v1h-1zM47 488h1v1h-1zM47 525h1v1h-1zM47 563h1v1h-1zM47 600h1v1h-1zM47 637h1v1h-1zM47 675h1v1h-1zM47 712h1v1h-1zM47 750h1v1h-1zM84 151h1v1h-1zM84 188h1v1h-1zM84 225h1v1h-1zM84 263h1v1h-1zM84 300h1v1h-1zM84 338h1v1h-1zM84 375h1v1h-1zM84 413h1v1h-1zM84 450h1v1h-1zM84 488h1v1h-1zM84 525h1v1h-1zM84 563h1v1h-1zM84 600h1v1h-1zM84 637h1v1h-1zM84 675h1v1h-1zM84 712h1v1h-1zM84 750h1v1h-1zM121 151h1v1h-1zM121 188h1v1h-1zM121 225h1v1h-1zM121 263h1v1h-1zM121 300h1v1h-1zM121 338h1v1h-1zM121 375h1v1h-1zM121 413h1v1h-1zM121 450h1v1h-1zM121 488h1v1h-1zM121 525h1v1h-1zM121 563h1v1h-1zM121 600h1v1h-1zM121 637h1v1h-1zM121 675h1v1h-1zM121 712h1v1h-1zM121 750h1v1h-1zM159 151h1v1h-1zM159 188h1v1h-1zM159 225h1v1h-1zM159 263h1v1h-1zM159 300h1v1h-1zM159 338h1v1h-1zM159 375h1v1h-1zM159 413h1v1h-1zM159 450h1v1h-1zM159 488h1v1h-1zM159 525h1v1h-1zM159 563h1v1h-1zM159 600h1v1h-1zM159 637h1v1h-1zM159 675h1v1h-1zM159 712h1v1h-1zM159 750h1v1h-1zM196 151h1v1h-1zM196 188h1v1h-1zM196 225h1v1h-1zM196 263h1v1h-1zM196 300h1v1h-1zM196 338h1v1h-1zM196 375h1v1h-1zM196 413h1v1h-1zM196 450h1v1h-1zM196 488h1v1h-1zM196 525h1v1h-1zM196 563h1v1h-1zM196 600h1v1h-1zM196 637h1v1h-1zM196 675h1v1h-1zM196 712h1v1h-1zM196 750h1v1h-1zM234 151h1v1h-1zM234 188h1v1h-1zM234 225h1v1h-1zM234 263h1v1h-1zM234 300h1v1h-1zM234 338h1v1h-1zM234 375h1v1h-1zM234 413h1v1h-1zM234 450h1v1h-1zM234 488h1v1h-1zM234 525h1v1h-1zM234 563h1v1h-1zM234 600h1v1h-1zM234 637h1v1h-1zM234 675h1v1h-1zM234 712h1v1h-1zM234 750h1v1h-1zM271 151h1v1h-1zM271 188h1v1h-1zM271 225h1v1h-1zM271 263h1v1h-1zM271 300h1v1h-1zM271 338h1v1h-1zM271 375h1v1h-1zM271 413h1v1h-1zM271 450h1v1h-1zM271 488h1v1h-1zM271 525h1v1h-1zM271 563h1v1h-1zM271 600h1v1h-1zM271 637h1v1h-1zM271 675h1v1h-1zM271 712h1v1h-1zM271 750h1v1h-1zM309 151h1v1h-1zM309 188h1v1h-1zM309 225h1v1h-1zM309 263h1v1h-1zM309 300h1v1h-1zM309 338h1v1h-1zM309 375h1v1h-1zM309 413h1v1h-1zM309 450h1v1h-1zM309 488h1v1h-1zM309 525h1v1h-1zM309 563h1v1h-1zM309 600h1v1h-1zM309 637h1v1h-1zM309 675h1v1h-1zM309 712h1v1h-1zM309 750h1v1h-1zM346 151h1v1h-1zM346 188h1v1h-1zM346 225h1v1h-1zM346 263h1v1h-1zM346 300h1v1h-1zM346 338h1v1h-1zM346 375h1v1h-1zM346 413h1v1h-1zM346 450h1v1h-1zM346 488h1v1h-1zM346 525h1v1h-1zM346 563h1v1h-1zM346 600h1v1h-1zM346 637h1v1h-1zM346 675h1v1h-1zM346 712h1v1h-1zM346 750h1v1h-1zM384 151h1v1h-1zM384 188h1v1h-1zM384 225h1v1h-1zM384 263h1v1h-1zM384 300h1v1h-1zM384 338h1v1h-1zM384 375h1v1h-1zM384 413h1v1h-1zM384 450h1v1h-1zM384 488h1v1h-1zM384 525h1v1h-1zM384 563h1v1h-1zM384 600h1v1h-1zM384 637h1v1h-1zM384 675h1v1h-1zM384 712h1v1h-1zM384 750h1v1h-1zM421 151h1v1h-1zM421 188h1v1h-1zM421 225h1v1h-1zM421 263h1v1h-1zM421 300h1v1h-1zM421 338h1v1h-1zM421 375h1v1h-1zM421 413h1v1h-1zM421 450h1v1h-1zM421 488h1v1h-1zM421 525h1v1h-1zM421 563h1v1h-1zM421 600h1v1h-1zM421 637h1v1h-1zM421 675h1v1h-1zM421 712h1v1h-1zM421 750h1v1h-1zM459 151h1v1h-1zM459 188h1v1h-1zM459 225h1v1h-1zM459 263h1v1h-1zM459 300h1v1h-1zM459 338h1v1h-1zM459 375h1v1h-1zM459 413h1v1h-1zM459 450h1v1h-1zM459 488h1v1h-1zM459 525h1v1h-1zM459 563h1v1h-1zM459 600h1v1h-1zM459 637h1v1h-1zM459 675h1v1h-1zM459 712h1v1h-1zM459 750h1v1h-1zM496 151h1v1h-1zM496 188h1v1h-1zM496 225h1v1h-1zM496 263h1v1h-1zM496 300h1v1h-1zM496 338h1v1h-1zM496 375h1v1h-1zM496 413h1v1h-1zM496 450h1v1h-1zM496 488h1v1h-1zM496 525h1v1h-1zM496 563h1v1h-1zM496 600h1v1h-1zM496 637h1v1h-1zM496 675h1v1h-1zM496 712h1v1h-1zM496 750h1v1h-1zM533 151h1v1h-1zM533 188h1v1h-1zM533 225h1v1h-1zM533 263h1v1h-1zM533 300h1v1h-1zM533 338h1v1h-1zM533 375h1v1h-1zM533 413h1v1h-1zM533 450h1v1h-1zM533 488h1v1h-1zM533 525h1v1h-1zM533 563h1v1h-1zM533 600h1v1h-1zM533 637h1v1h-1zM533 675h1v1h-1zM533 712h1v1h-1zM533 750h1v1h-1zM571 151h1v1h-1zM571 188h1v1h-1zM571 225h1v1h-1zM571 263h1v1h-1zM571 300h1v1h-1zM571 338h1v1h-1zM571 375h1v1h-1zM571 413h1v1h-1zM571 450h1v1h-1zM571 488h1v1h-1zM571 525h1v1h-1zM571 563h1v1h-1zM571 600h1v1h-1zM571 637h1v1h-1zM571 675h1v1h-1zM571 712h1v1h-1zM571 750h1v1h-1zM608 151h1v1h-1zM608 188h1v1h-1zM608 225h1v1h-1zM608 263h1v1h-1zM608 300h1v1h-1zM608 338h1v1h-1zM608 375h1v1h-1zM608 413h1v1h-1zM608 450h1v1h-1zM608 488h1v1h-1zM608 525h1v1h-1zM608 563h1v1h-1zM608 600h1v1h-1zM608 637h1v1h-1zM608 675h1v1h-1zM608 712h1v1h-1zM608 750h1v1h-1zM646 151h1v1h-1zM646 188h1v1h-1zM646 225h1v1h-1zM646 263h1v1h-1zM646 300h1v1h-1zM646 338h1v1h-1zM646 375h1v1h-1zM646 413h1v1h-1zM646 450h1v1h-1zM646 488h1v1h-1zM646 525h1v1h-1zM646 563h1v1h-1zM646 600h1v1h-1zM646 637h1v1h-1zM646 675h1v1h-1zM646 712h1v1h-1zM646 750h1v1h-1zM683 151h1v1h-1zM683 188h1v1h-1zM683 225h1v1h-1zM683 263h1v1h-1zM683 300h1v1h-1zM683 338h1v1h-1zM683 375h1v1h-1zM683 413h1v1h-1zM683 450h1v1h-1zM683 488h1v1h-1zM683 525h1v1h-1zM683 563h1v1h-1zM683 600h1v1h-1zM683 637h1v1h-1zM683 675h1v1h-1zM683 712h1v1h-1zM683 750h1v1h-1z" fill="#7a7a7a"/><path d="M84 116h1v1h-1zM84 120h1v1h-1zM84 125h1v1h-1zM84 130h1v1h-1zM84 134h1v1h-1zM84 138h1v1h-1zM84 143h1v1h-1zM84 148h1v1h-1zM84 152h1v1h-1zM84 156h1v1h-1zM84 161h1v1h-1zM84 166h1v1h-1zM84 170h1v1h-1zM84 174h1v1h-1zM84 179h1v1h-1zM84 184h1v1h-1zM84 188h1v1h-1zM84 192h1v1h-1zM84 197h1v1h-1zM84 202h1v1h-1zM84 206h1v1h-1zM84 210h1v1h-1zM84 215h1v1h-1zM84 220h1v1h-1zM84 224h1v1h-1zM84 228h1v1h-1zM84 233h1v1h-1zM84 238h1v1h-1zM84 242h1v1h-1zM84 246h1v1h-1zM84 251h1v1h-1zM84 256h1v1h-1zM84 260h1v1h-1zM84 264h1v1h-1zM84 269h1v1h-1zM84 274h1v1h-1zM84 278h1v1h-1zM84 282h1v1h-1zM84 287h1v1h-1zM84 292h1v1h-1zM84 296h1v1h-1zM84 300h1v1h-1zM84 305h1v1h-1zM84 310h1v1h-1zM84 314h1v1h-1zM84 318h1v1h-1zM84 323h1v1h-1zM84 328h1v1h-1zM84 332h1v1h-1zM84 336h1v1h-1zM84 341h1v1h-1zM84 346h1v1h-1zM84 350h1v1h-1zM84 354h1v1h-1zM84 359h1v1h-1zM84 364h1v1h-1zM84 368h1v1h-1zM84 372h1v1h-1zM84 377h1v1h-1zM84 382h1v1h-1zM84 386h1v1h-1zM84 390h1v1h-1zM84 395h1v1h-1zM84 400h1v1h-1zM84 404h1v1h-1zM84 408h1v1h-1zM84 413h1v1h-1zM84 418h1v1h-1zM84 422h1v1h-1zM84 426h1v1h-1zM84 431h1v1h-1zM84 436h1v1h-1zM84 440h1v1h-1zM84 444h1v1h-1zM84 449h1v1h-1zM84 454h1v1h-1zM84 458h1v1h-1zM84 462h1v1h-1zM84 467h1v1h-1zM84 472h1v1h-1zM84 476h1v1h-1zM84 480h1v1h-1zM84 485h1v1h-1zM84 490h1v1h-1zM84 494h1v1h-1zM84 498h1v1h-1zM84 503h1v1h-1zM84 508h1v1h-1zM84 512h1v1h-1zM84 516h1v1h-1zM84 521h1v1h-1zM84 526h1v1h-1zM84 530h1v1h-1zM84 534h1v1h-1zM84 539h1v1h-1zM84 544h1v1h-1zM84 548h1v1h-1zM84 552h1v1h-1zM84 557h1v1h-1zM84 562h1v1h-1zM84 566h1v1h-1zM84 570h1v1h-1zM84 575h1v1h-1zM84 580h1v1h-1zM84 584h1v1h-1zM84 588h1v1h-1zM84 593h1v1h-1zM84 598h1v1h-1zM84 602h1v1h-1zM84 606h1v1h-1zM84 611h1v1h-1zM84 616h1v1h-1zM84 620h1v1h-1zM84 624h1v1h-1zM84 629h1v1h-1zM84 634h1v1h-1zM84 638h1v1h-1zM84 642h1v1h-1zM84 647h1v1h-1zM84 652h1v1h-1zM84 656h1v1h-1zM84 660h1v1h-1zM84 665h1v1h-1zM84 670h1v1h-1zM84 674h1v1h-1zM84 678h1v1h-1zM84 683h1v1h-1zM84 688h1v1h-1zM84 692h1v1h-1zM84 696h1v1h-1zM84 701h1v1h-1zM84 706h1v1h-1zM84 710h1v1h-1zM84 714h1v1h-1zM84 719h1v1h-1zM84 724h1v1h-1zM84 728h1v1h-1zM84 732h1v1h-1zM84 737h1v1h-1zM84 742h1v1h-1zM84 746h1v1h-1zM84 750h1v1h-1zM84 755h1v1h-1zM458 116h1v1h-1zM458 120h1v1h-1zM458 125h1v1h-1zM458 130h1v1h-1zM458 134h1v1h-1zM458 138h1v1h-1zM458 143h1v1h-1zM458 148h1v1h-1zM458 152h1v1h-1zM458 156h1v1h-1zM458 161h1v1h-1zM458 166h1v1h-1zM458 170h1v1h-1zM458 174h1v1h-1zM458 179h1v1h-1zM458 184h1v1h-1zM458 188h1v1h-1zM458 192h1v1h-1zM458 197h1v1h-1zM458 202h1v1h-1zM458 206h1v1h-1zM458 210h1v1h-1zM458 215h1v1h-1zM458 220h1v1h-1zM458 224h1v1h-1zM458 228h1v1h-1zM458 233h1v1h-1zM458 238h1v1h-1zM458 242h1v1h-1zM458 246h1v1h-1zM458 251h1v1h-1zM458 256h1v1h-1zM458 260h1v1h-1zM458 264h1v1h-1zM458 269h1v1h-1zM458 274h1v1h-1zM458 278h1v1h-1zM458 282h1v1h-1zM458 287h1v1h-1zM458 292h1v1h-1zM458 296h1v1h-1zM458 300h1v1h-1zM458 305h1v1h-1zM458 310h1v1h-1zM458 314h1v1h-1zM458 318h1v1h-1zM458 323h1v1h-1zM458 328h1v1h-1zM458 332h1v1h-1zM458 336h1v1h-1zM458 341h1v1h-1zM458 346h1v1h-1zM458 350h1v1h-1zM458 354h1v1h-1zM458 359h1v1h-1zM458 364h1v1h-1zM458 368h1v1h-1zM458 372h1v1h-1zM458 377h1v1h-1zM458 382h1v1h-1zM458 386h1v1h-1zM458 390h1v1h-1zM458 395h1v1h-1zM458 400h1v1h-1zM458 404h1v1h-1zM458 408h1v1h-1zM458 413h1v1h-1zM458 418h1v1h-1zM458 422h1v1h-1zM458 426h1v1h-1zM458 431h1v1h-1zM458 436h1v1h-1zM458 440h1v1h-1zM458 444h1v1h-1zM458 449h1v1h-1zM458 454h1v1h-1zM458 458h1v1h-1zM458 462h1v1h-1zM458 467h1v1h-1zM458 472h1v1h-1zM458 476h1v1h-1zM458 480h1v1h-1zM458 485h1v1h-1zM458 490h1v1h-1zM458 494h1v1h-1zM458 498h1v1h-1zM458 503h1v1h-1zM458 508h1v1h-1zM458 512h1v1h-1zM458 516h1v1h-1zM458 521h1v1h-1zM458 526h1v1h-1zM458 530h1v1h-1zM458 534h1v1h-1zM458 539h1v1h-1zM458 544h1v1h-1zM458 548h1v1h-1zM458 552h1v1h-1zM458 557h1v1h-1zM458 562h1v1h-1zM458 566h1v1h-1zM458 570h1v1h-1zM458 575h1v1h-1zM458 580h1v1h-1zM458 584h1v1h-1zM458 588h1v1h-1zM458 593h1v1h-1zM458 598h1v1h-1zM458 602h1v1h-1zM458 606h1v1h-1zM458 611h1v1h-1zM458 616h1v1h-1zM458 620h1v1h-1zM458 624h1v1h-1zM458 629h1v1h-1zM458 634h1v1h-1zM458 638h1v1h-1zM458 642h1v1h-1zM458 647h1v1h-1zM458 652h1v1h-1zM458 656h1v1h-1zM458 660h1v1h-1zM458 665h1v1h-1zM458 670h1v1h-1zM458 674h1v1h-1zM458 678h1v1h-1zM458 683h1v1h-1zM458 688h1v1h-1zM458 692h1v1h-1zM458 696h1v1h-1zM458 701h1v1h-1zM458 706h1v1h-1zM458 710h1v1h-1zM458 714h1v1h-1zM458 719h1v1h-1zM458 724h1v1h-1zM458 728h1v1h-1zM458 732h1v1h-1zM458 737h1v1h-1zM458 742h1v1h-1zM458 746h1v1h-1zM458 750h1v1h-1zM458 755h1v1h-1zM38 338h1v1h-1zM42 338h1v1h-1zM47 338h1v1h-1zM52 338h1v1h-1zM56 338h1v1h-1zM60 338h1v1h-1zM65 338h1v1h-1zM70 338h1v1h-1zM74 338h1v1h-1zM78 338h1v1h-1zM83 338h1v1h-1zM88 338h1v1h-1zM92 338h1v1h-1zM96 338h1v1h-1zM101 338h1v1h-1zM106 338h1v1h-1zM110 338h1v1h-1zM114 338h1v1h-1zM119 338h1v1h-1zM124 338h1v1h-1zM128 338h1v1h-1zM132 338h1v1h-1zM137 338h1v1h-1zM142 338h1v1h-1zM146 338h1v1h-1zM150 338h1v1h-1zM155 338h1v1h-1zM160 338h1v1h-1zM164 338h1v1h-1zM168 338h1v1h-1zM173 338h1v1h-1zM178 338h1v1h-1zM182 338h1v1h-1zM186 338h1v1h-1zM191 338h1v1h-1zM196 338h1v1h-1zM200 338h1v1h-1zM204 338h1v1h-1zM209 338h1v1h-1zM214 338h1v1h-1zM218 338h1v1h-1zM222 338h1v1h-1zM227 338h1v1h-1zM232 338h1v1h-1zM236 338h1v1h-1zM240 338h1v1h-1zM245 338h1v1h-1zM250 338h1v1h-1zM254 338h1v1h-1zM258 338h1v1h-1zM263 338h1v1h-1zM268 338h1v1h-1zM272 338h1v1h-1zM276 338h1v1h-1zM281 338h1v1h-1zM286 338h1v1h-1zM290 338h1v1h-1zM294 338h1v1h-1zM299 338h1v1h-1zM304 338h1v1h-1zM308 338h1v1h-1zM312 338h1v1h-1zM317 338h1v1h-1zM322 338h1v1h-1zM326 338h1v1h-1zM330 338h1v1h-1zM335 338h1v1h-1zM340 338h1v1h-1zM344 338h1v1h-1zM348 338h1v1h-1zM353 338h1v1h-1zM358 338h1v1h-1zM362 338h1v1h-1zM366 338h1v1h-1zM371 338h1v1h-1zM376 338h1v1h-1zM380 338h1v1h-1zM384 338h1v1h-1zM389 338h1v1h-1zM394 338h1v1h-1zM398 338h1v1h-1zM402 338h1v1h-1zM407 338h1v1h-1zM412 338h1v1h-1zM416 338h1v1h-1zM420 338h1v1h-1zM425 338h1v1h-1zM430 338h1v1h-1zM434 338h1v1h-1zM438 338h1v1h-1zM443 338h1v1h-1zM448 338h1v1h-1zM452 338h1v1h-1zM456 338h1v1h-1zM461 338h1v1h-1zM466 338h1v1h-1zM470 338h1v1h-1zM474 338h1v1h-1zM479 338h1v1h-1zM484 338h1v1h-1zM488 338h1v1h-1zM492 338h1v1h-1zM497 338h1v1h-1zM502 338h1v1h-1zM506 338h1v1h-1zM510 338h1v1h-1zM515 338h1v1h-1zM520 338h1v1h-1zM524 338h1v1h-1zM528 338h1v1h-1zM533 338h1v1h-1zM538 338h1v1h-1zM542 338h1v1h-1zM546 338h1v1h-1zM551 338h1v1h-1zM556 338h1v1h-1zM560 338h1v1h-1zM564 338h1v1h-1zM569 338h1v1h-1zM574 338h1v1h-1zM578 338h1v1h-1zM582 338h1v1h-1zM587 338h1v1h-1zM592 338h1v1h-1zM596 338h1v1h-1zM600 338h1v1h-1zM605 338h1v1h-1zM610 338h1v1h-1zM614 338h1v1h-1zM618 338h1v1h-1zM623 338h1v1h-1zM628 338h1v1h-1zM632 338h1v1h-1zM636 338h1v1h-1zM641 338h1v1h-1zM646 338h1v1h-1zM650 338h1v1h-1zM654 338h1v1h-1zM659 338h1v1h-1zM664 338h1v1h-1zM668 338h1v1h-1zM672 338h1v1h-1zM677 338h1v1h-1zM682 338h1v1h-1zM686 338h1v1h-1zM690 338h1v1h-1zM695 338h1v1h-1zM38 712h1v1h-1zM42 712h1v1h-1zM47 712h1v1h-1zM52 712h1v1h-1zM56 712h1v1h-1zM60 712h1v1h-1zM65 712h1v1h-1zM70 712h1v1h-1zM74 712h1v1h-1zM78 712h1v1h-1zM83 712h1v1h-1zM88 712h1v1h-1zM92 712h1v1h-1zM96 712h1v1h-1zM101 712h1v1h-1zM106 712h1v1h-1zM110 712h1v1h-1zM114 712h1v1h-1zM119 712h1v1h-1zM124 712h1v1h-1zM128 712h1v1h-1zM132 712h1v1h-1zM137 712h1v1h-1zM142 712h1v1h-1zM146 712h1v1h-1zM150 712h1v1h-1zM155 712h1v1h-1zM160 712h1v1h-1zM164 712h1v1h-1zM168 712h1v1h-1zM173 712h1v1h-1zM178 712h1v1h-1zM182 712h1v1h-1zM186 712h1v1h-1zM191 712h1v1h-1zM196 712h1v1h-1zM200 712h1v1h-1zM204 712h1v1h-1zM209 712h1v1h-1zM214 712h1v1h-1zM218 712h1v1h-1zM222 712h1v1h-1zM227 712h1v1h-1zM232 712h1v1h-1zM236 712h1v1h-1zM240 712h1v1h-1zM245 712h1v1h-1zM250 712h1v1h-1zM254 712h1v1h-1zM258 712h1v1h-1zM263 712h1v1h-1zM268 712h1v1h-1zM272 712h1v1h-1zM276 712h1v1h-1zM281 712h1v1h-1zM286 712h1v1h-1zM290 712h1v1h-1zM294 712h1v1h-1zM299 712h1v1h-1zM304 712h1v1h-1zM308 712h1v1h-1zM312 712h1v1h-1zM317 712h1v1h-1zM322 712h1v1h-1zM326 712h1v1h-1zM330 712h1v1h-1zM335 712h1v1h-1zM340 712h1v1h-1zM344 712h1v1h-1zM348 712h1v1h-1zM353 712h1v1h-1zM358 712h1v1h-1zM362 712h1v1h-1zM366 712h1v1h-1zM371 712h1v1h-1zM376 712h1v1h-1zM380 712h1v1h-1zM384 712h1v1h-1zM389 712h1v1h-1zM394 712h1v1h-1zM398 712h1v1h-1zM402 712h1v1h-1zM407 712h1v1h-1zM412 712h1v1h-1zM416 712h1v1h-1zM420 712h1v1h-1zM425 712h1v1h-1zM430 712h1v1h-1zM434 712h1v1h-1zM438 712h1v1h-1zM443 712h1v1h-1zM448 712h1v1h-1zM452 712h1v1h-1zM456 712h1v1h-1zM461 712h1v1h-1zM466 712h1v1h-1zM470 712h1v1h-1zM474 712h1v1h-1zM479 712h1v1h-1zM484 712h1v1h-1zM488 712h1v1h-1zM492 712h1v1h-1zM497 712h1v1h-1zM502 712h1v1h-1zM506 712h1v1h-1zM510 712h1v1h-1zM515 712h1v1h-1zM520 712h1v1h-1zM524 712h1v1h-1zM528 712h1v1h-1zM533 712h1v1h-1zM538 712h1v1h-1zM542 712h1v1h-1zM546 712h1v1h-1zM551 712h1v1h-1zM556 712h1v1h-1zM560 712h1v1h-1zM564 712h1v1h-1zM569 712h1v1h-1zM574 712h1v1h-1zM578 712h1v1h-1zM582 712h1v1h-1zM587 712h1v1h-1zM592 712h1v1h-1zM596 712h1v1h-1zM600 712h1v1h-1zM605 712h1v1h-1zM610 712h1v1h-1zM614 712h1v1h-1zM618 712h1v1h-1zM623 712h1v1h-1zM628 712h1v1h-1zM632 712h1v1h-1zM636 712h1v1h-1zM641 712h1v1h-1zM646 712h1v1h-1zM650 712h1v1h-1zM654 712h1v1h-1zM659 712h1v1h-1zM664 712h1v1h-1zM668 712h1v1h-1zM672 712h1v1h-1zM677 712h1v1h-1zM682 712h1v1h-1zM686 712h1v1h-1zM690 712h1v1h-1zM695 712h1v1h-1z" fill="#3c3c3c"/><path d="M65 712.5h39M84.5 693v38.5" stroke="#e00000" stroke-width="1"/><path d="M700.5 125.5l4-4 4 4M700.5 749.5l4 4 4-4" fill="none" stroke="#606060" stroke-width="1.5"/><path d="M48 762l-4 4 4 4M686.5 762l4 4-4 4" fill="none" stroke="#606060" stroke-width="1.5"/><rect x="48.5" y="783.5" width="15" height="15.5" fill="#fafafa" stroke="#777" stroke-width="1.2"/><path d="M49 798.5L63 784" stroke="#888" stroke-width="0.6"/><circle cx="56.1" cy="791" r="1.9" fill="#00f07c" stroke="#0b7a3c" stroke-width="0.6"/><path d="M84.7 783v16" stroke="#555" stroke-width="1" stroke-dasharray="1.6 1"/><path d="M76.5 790.7h16.5" stroke="#555" stroke-width="1" stroke-dasharray="1.6 1"/><circle cx="108.3" cy="783.8" r="1.8" fill="#00f07c" stroke="#0b7a3c" stroke-width="0.6"/><circle cx="108.3" cy="788.8" r="1.8" fill="#00f07c" stroke="#0b7a3c" stroke-width="0.6"/><circle cx="108.3" cy="793.8" r="1.8" fill="#00f07c" stroke="#0b7a3c" stroke-width="0.6"/><circle cx="108.3" cy="798.8" r="1.8" fill="#00f07c" stroke="#0b7a3c" stroke-width="0.6"/><circle cx="114.2" cy="783.8" r="1.8" fill="#00f07c" stroke="#0b7a3c" stroke-width="0.6"/><circle cx="114.2" cy="788.8" r="1.8" fill="#00f07c" stroke="#0b7a3c" stroke-width="0.6"/><circle cx="114.2" cy="793.8" r="1.8" fill="#00f07c" stroke="#0b7a3c" stroke-width="0.6"/><circle cx="114.2" cy="798.8" r="1.8" fill="#00f07c" stroke="#0b7a3c" stroke-width="0.6"/><circle cx="120" cy="783.8" r="1.8" fill="#00f07c" stroke="#0b7a3c" stroke-width="0.6"/><circle cx="120" cy="788.8" r="1.8" fill="#00f07c" stroke="#0b7a3c" stroke-width="0.6"/><circle cx="120" cy="793.8" r="1.8" fill="#00f07c" stroke="#0b7a3c" stroke-width="0.6"/><circle cx="120" cy="798.8" r="1.8" fill="#00f07c" stroke="#0b7a3c" stroke-width="0.6"/><path d="M139.7 783.6L150.9 794.9M135.8 787.7c5 1 9 4 10.9 10.5" fill="none" stroke="#6a6a6a" stroke-width="1.1"/><circle cx="139.7" cy="783.6" r="1.9" fill="#00f07c" stroke="#0b7a3c" stroke-width="0.6"/><circle cx="135.8" cy="787.7" r="1.9" fill="#00f07c" stroke="#0b7a3c" stroke-width="0.6"/><circle cx="150.9" cy="794.9" r="1.9" fill="#00f07c" stroke="#0b7a3c" stroke-width="0.6"/><circle cx="146.7" cy="798.2" r="1.9" fill="#00f07c" stroke="#0b7a3c" stroke-width="0.6"/><path d="M164.5 788.3L172 791.5L174.9 799M168.4 783.5L180.1 795" fill="none" stroke="#6a6a6a" stroke-width="1"/><circle cx="168.4" cy="783.5" r="1.9" fill="#00f07c" stroke="#0b7a3c" stroke-width="0.6"/><circle cx="164.5" cy="788.3" r="1.9" fill="#00f07c" stroke="#0b7a3c" stroke-width="0.6"/><circle cx="172.3" cy="787.4" r="1.9" fill="#00f07c" stroke="#0b7a3c" stroke-width="0.6"/><circle cx="171.7" cy="791.6" r="1.9" fill="#00f07c" stroke="#0b7a3c" stroke-width="0.6"/><circle cx="176.2" cy="791" r="1.9" fill="#00f07c" stroke="#0b7a3c" stroke-width="0.6"/><circle cx="180.1" cy="795" r="1.9" fill="#00f07c" stroke="#0b7a3c" stroke-width="0.6"/><circle cx="174.9" cy="799" r="1.9" fill="#00f07c" stroke="#0b7a3c" stroke-width="0.6"/><path d="M197.5 782L210.5 795M193 788c6 1 10 5 11.5 11.5" fill="none" stroke="#6a6a6a" stroke-width="1.1"/><circle cx="204" cy="788.3" r="1.9" fill="#00f07c" stroke="#0b7a3c" stroke-width="0.6"/><circle cx="194.2" cy="798.3" r="1.9" fill="#00f07c" stroke="#0b7a3c" stroke-width="0.6"/><path d="M226 782L240 795M222 788c6 1 10 5 11.5 11.5" fill="none" stroke="#6a6a6a" stroke-width="1.1"/><circle cx="233" cy="788.3" r="1.9" fill="#00f07c" stroke="#0b7a3c" stroke-width="0.6"/><circle cx="229.7" cy="791.6" r="1.9" fill="#00f07c" stroke="#0b7a3c" stroke-width="0.6"/><path d="M255 782L268 796M250.5 789c6 1 9.5 5 10.5 11" fill="none" stroke="#6a6a6a" stroke-width="1.1"/><circle cx="259" cy="787" r="1.9" fill="#00f07c" stroke="#0b7a3c" stroke-width="0.6"/><circle cx="260.7" cy="795.3" r="1.9" fill="#00f07c" stroke="#0b7a3c" stroke-width="0.6"/><path d="M264 787l3-2v4zM257 795.5l-3-2v4z" fill="#00f07c" stroke="#0b7a3c" stroke-width="0.5"/><path d="M281.5 784.5L295 798M295 784.5L281.5 798" stroke="#6a6a6a" stroke-width="1.1"/><circle cx="288" cy="791.3" r="1.9" fill="#00f07c" stroke="#0b7a3c" stroke-width="0.6"/><path d="M314 789h17M314 793.6h17" stroke="#7dffb8" stroke-width="1.3"/><path d="M314 791.3h17" stroke="#333" stroke-width="1"/><circle cx="323" cy="791.3" r="1.9" fill="#00f07c" stroke="#0b7a3c" stroke-width="0.6"/><path d="M349 783v17M353.6 783v17" stroke="#7dffb8" stroke-width="1.3"/><path d="M351.3 783v17" stroke="#333" stroke-width="1"/><circle cx="351.3" cy="791.3" r="1.9" fill="#00f07c" stroke="#0b7a3c" stroke-width="0.6"/><path d="M372 789h17M372 793.6h17M378 783v17M382.6 783v17" stroke="#7dffb8" stroke-width="1.3"/><path d="M372 791.3h17M380.3 783v17" stroke="#333" stroke-width="1"/><circle cx="380.3" cy="791.3" r="1.9" fill="#00f07c" stroke="#0b7a3c" stroke-width="0.6"/><path d="M407 795l4.5-4.5 4 4-4.5 4.5z" fill="#fff" stroke="#444" stroke-width="0.8"/><path d="M418 785v9M413 790h10" stroke="#555" stroke-width="0.8"/><circle cx="418" cy="790" r="2.3" fill="#00f07c" stroke="#0b7a3c" stroke-width="0.6"/><path d="M436.5 787v-1.5a2.8 2.8 0 0 1 5.6 0v1.5" fill="none" stroke="#111" stroke-width="1.3"/><rect x="435" y="786.5" width="8.5" height="5.5" fill="#000"/><path d="M440 799l4.5-4.5 4 4-4.5 4.5z" fill="#fff" stroke="#444" stroke-width="0.8"/><path d="M449 788v9M444 792.5h10" stroke="#555" stroke-width="0.8"/><circle cx="449" cy="792.5" r="2.3" fill="#00f07c" stroke="#0b7a3c" stroke-width="0.6"/><rect x="477.0" y="784.5" width="15" height="11" fill="#fff" stroke="#333" stroke-width="1.2"/><path d="M481.5 798.5h6M484.5 795.5v3" stroke="#222" stroke-width="1.4"/><rect x="478.0" y="785.5" width="3" height="9.2" fill="#00f07c"/><rect x="507.0" y="784.5" width="15" height="11" fill="#bcd8ee" stroke="#333" stroke-width="1.2"/><path d="M511.5 798.5h6M514.5 795.5v3" stroke="#222" stroke-width="1.4"/><rect x="518.0" y="785.5" width="3" height="9.2" fill="#00f07c"/><rect x="535.0" y="784.5" width="15" height="11" fill="#fff" stroke="#333" stroke-width="1.2"/><path d="M539.5 798.5h6M542.5 795.5v3" stroke="#222" stroke-width="1.4"/><rect x="536.0" y="785.5" width="13" height="2.8" fill="#00f07c"/><rect x="564.0" y="784.5" width="15" height="11" fill="#fff" stroke="#333" stroke-width="1.2"/><path d="M568.5 798.5h6M571.5 795.5v3" stroke="#222" stroke-width="1.4"/><rect x="565.0" y="792" width="13" height="2.8" fill="#00f07c"/><rect x="593.0" y="784.5" width="15" height="11" fill="#fff" stroke="#333" stroke-width="1.2"/><path d="M597.5 798.5h6M600.5 795.5v3" stroke="#222" stroke-width="1.4"/><rect x="597.5" y="787.5" width="6" height="4.5" fill="#00f07c"/><path d="M631.5 791.8h7.5M635.2 788v7.6" stroke="#000" stroke-width="2.6"/><rect x="641.5" y="783" width="9" height="17.5" fill="#f8f8f8" stroke="#999" stroke-width="0.9"/><path d="M643.5 786h5M643.5 789h5M643.5 792h5M643.5 795h5M643.5 798h5" stroke="#888" stroke-width="0.8"/><path d="M660.5 791.8h7.5M664.2 788v7.6" stroke="#000" stroke-width="2.6"/><rect x="670.5" y="783" width="9" height="17.5" fill="#f8f8f8" stroke="#999" stroke-width="0.9"/><rect x="671" y="791" width="8" height="1" fill="#00f07c"/><path d="M672 789l5.5-5" stroke="#555" stroke-width="0.8"/><circle cx="675" cy="796" r="2.6" fill="none" stroke="#555" stroke-width="0.8"/><rect x="671" y="799" width="8" height="1.3" fill="#00f07c"/><path d="M484 829.5c3 2 6 1 8-3 2-5 3-10 10-10 6 0 9 2 9 7" fill="none" stroke="#000" stroke-width="1.5"/><rect x="501" y="823.8" width="30" height="40.5" rx="5" fill="#fff" stroke="#000" stroke-width="2"/><path d="M501 839.5h30M511.5 824v15.5M521 824v15.5" stroke="#000" stroke-width="1.6"/><rect x="512.3" y="824.8" width="8" height="14" fill="#00f07c"/><rect x="1076" y="856" width="1" height="1" fill="#aaa"/><rect x="1073" y="859" width="1" height="1" fill="#aaa"/><rect x="1076" y="859" width="1" height="1" fill="#aaa"/><rect x="1070" y="862" width="1" height="1" fill="#aaa"/><rect x="1073" y="862" width="1" height="1" fill="#aaa"/><rect x="1076" y="862" width="1" height="1" fill="#aaa"/><rect x="1050" y="120.5" width="4.8" height="4.3" fill="#888" stroke="#333" stroke-width="1.1"/><rect x="1047.8" y="123.3" width="5" height="4.6" fill="#e8e8e8" stroke="#333" stroke-width="1.1"/><path d="M1067.6 121l6.4 6.4M1074 121l-6.4 6.4" stroke="#333" stroke-width="1.6"/><path d="M742 162.3h4.5M744.2 160.5v3.6" stroke="#777" stroke-width="1.1"/><path d="M742 165.9h4.4" stroke="#b0b0b0" stroke-width="1.6"/><path d="M1027.5 161l4 4 4-4" fill="none" stroke="#555" stroke-width="1"/><defs><linearGradient id="rb" x1="0" x2="1"><stop offset="0" stop-color="#00f"/><stop offset="0.33" stop-color="#0ff"/><stop offset="0.55" stop-color="#0f0"/><stop offset="0.75" stop-color="#ff0"/><stop offset="1" stop-color="#f00"/></linearGradient><linearGradient id="rb2" x1="0" y1="0" x2="0" y2="1"><stop offset="0" stop-color="#fff" stop-opacity="0"/><stop offset="1" stop-color="#f0f" stop-opacity="0.6"/></linearGradient></defs><rect x="1048.5" y="159" width="11" height="8" fill="url(#rb)" stroke="#111" stroke-width="1"/><rect x="1049" y="159.5" width="10" height="7" fill="url(#rb2)"/><rect x="1050" y="276.5" width="4.8" height="4.3" fill="#888" stroke="#333" stroke-width="1.1"/><rect x="1047.8" y="279.3" width="5" height="4.6" fill="#e8e8e8" stroke="#333" stroke-width="1.1"/><path d="M1067.6 277l6.4 6.4M1074 277l-6.4 6.4" stroke="#333" stroke-width="1.6"/><path d="M950 305l3 3 5.5-6" fill="none" stroke="#222" stroke-width="1.1"/><path d="M1073.30 306.00L1071.25 307.76L1071.45 310.45L1068.76 310.25L1067.00 312.30L1065.24 310.25L1062.55 310.45L1062.75 307.76L1060.70 306.00L1062.75 304.24L1062.55 301.55L1065.24 301.75L1067.00 299.70L1068.76 301.75L1071.45 301.55L1071.25 304.24z" fill="#00f07c" stroke="#00f07c" stroke-width="1.2" stroke-linejoin="round"/><circle cx="1067" cy="306" r="2.2" fill="#e1e1e1"/><path d="M726 337.5c3-4.5 9-4.5 12 0c-3 4.5-9 4.5-12 0z" fill="#fff" stroke="#111" stroke-width="1.6"/><circle cx="732" cy="337.5" r="2.6" fill="#00f07c" stroke="#111" stroke-width="0.6"/><circle cx="732" cy="337.5" r="0.9" fill="#111"/><path d="M757.5 337.5c3-4.5 9-4.5 12 0c-3 4.5-9 4.5-12 0z" fill="#fff" stroke="#b4b4b4" stroke-width="1.6"/><circle cx="763.5" cy="337.5" r="2.6" fill="#c9c9c9" stroke="#b4b4b4" stroke-width="0.6"/><circle cx="763.5" cy="337.5" r="0.9" fill="#b4b4b4"/><path d="M793 331.5h4M793 343.5h4M795 332v11" stroke="#333" stroke-width="1.1"/><path d="M795 333l-1.5 2.5h3zM795 342.5l-1.5-2.5h3z" fill="#00f07c"/><text x="798" y="340" font-family="Liberation Sans" font-weight="bold" font-size="6" fill="#222">A</text><path d="M822 331v12M834 331v12M820 333h4M832 341h4" stroke="#555" stroke-width="0.8" stroke-dasharray="1 1"/><path d="M822 342l5-5 2.2 2.2-5 5z" fill="#00f07c" stroke="#0a6a38" stroke-width="0.6"/><path d="M828 334v2M830 334h2" stroke="#555" stroke-width="0.8"/><path d="M853 331h7M853 334h7M853 340.5h7M853 343.5h7" stroke="#444" stroke-width="1.5"/><path d="M853 337.3h9" stroke="#00f07c" stroke-width="2"/><path d="M863.5 332v11" stroke="#00f07c" stroke-width="1.8"/><path d="M863.5 330.5l-2.3 2.8h4.6zM863.5 344.5l-2.3-2.8h4.6z" fill="#00f07c" stroke="#0a6a38" stroke-width="0.5"/><path d="M885 334.5h6M885 337.5h6M885 340.5h6M885 343.5h6" stroke="#444" stroke-width="1.5"/><path d="M885 331.3h12" stroke="#00f07c" stroke-width="2"/><path d="M895 333v11.5" stroke="#00f07c" stroke-width="2"/><path d="M895 331.5l-2.5 3h5z" fill="#00f07c"/><path d="M916 337l7 7" stroke="#00f07c" stroke-width="2.2"/><path d="M916.5 336.5l3-3M923 343.5l3-3" stroke="#555" stroke-width="0.8"/><path d="M919 333l2-2M926 338l2-2" stroke="#555" stroke-width="0.8"/><text x="924.5" y="336" font-family="Liberation Sans" font-weight="bold" font-size="5.5" fill="#333">A</text><path d="M951.3 336.5v-2.5a3.2 3.2 0 0 1 6.4 0v2.5" fill="none" stroke="#cdcdcd" stroke-width="1.6"/><rect x="949.5" y="336.0" width="10" height="7.5" rx="0.5" fill="#cdcdcd"/><path d="M983.3 336.5v-2.5a3.2 3.2 0 0 1 6.4 0v2.5" fill="none" stroke="#000" stroke-width="1.6"/><rect x="981.5" y="336.0" width="10" height="7.5" rx="0.5" fill="#000"/><path d="M1018.3 331.5v12M1012.3 337.5h12" stroke="#00f07c" stroke-width="4.4"/><path d="M1043 340.5h14" stroke="#666" stroke-width="0.9"/><path d="M1043 340.5l2.5-1.5v3zM1057 340.5l-2.5-1.5v3z" fill="#00f07c"/><path d="M1043 338v5M1057 338v5" stroke="#666" stroke-width="0.8"/><path d="M1047.8 338l2.2-5.5 2.2 5.5M1048.6 336.2h2.8" fill="none" stroke="#444" stroke-width="0.9"/><rect x="726" y="367.5" width="12" height="4" rx="0.8" fill="#00f07c" stroke="#0bbf60" stroke-width="0.5"/><path d="M758 371l6.5-6.5 3.5 3.5-6.5 6.5z" fill="#00f07c" stroke="#111" stroke-width="0.9"/><path d="M764.5 364.5l3.5 3.5 1.5 1.5" stroke="#555" stroke-width="1.2"/><path d="M758 371c-1 1.5-0.5 3 1.5 3.5" fill="none" stroke="#333" stroke-width="0.6"/><path d="M798 363.5h6M798 366.5h6M798 375.5h6" stroke="#444" stroke-width="1.5"/><path d="M798 369.5h5M798 372.5h10" stroke="#00f07c" stroke-width="1.4"/><path d="M804 367.5h3a2 2 0 0 1 0 4" fill="none" stroke="#00f07c" stroke-width="1.4"/><rect x="743.5" y="393.5" width="10" height="10" fill="none" stroke="#444" stroke-width="0.8"/><circle cx="743.5" cy="403.5" r="1.1" fill="#1a5"/><circle cx="753.5" cy="393.5" r="1.1" fill="#1a5"/><path d="M766.5 398.8c3-4.5 9-4.5 12 0c-3 4.5-9 4.5-12 0z" fill="#fff" stroke="#111" stroke-width="1.6"/><circle cx="772.5" cy="398.8" r="2.6" fill="#00f07c" stroke="#111" stroke-width="0.6"/><circle cx="772.5" cy="398.8" r="0.9" fill="#111"/><path d="M793.8 398.5v-2.5a3.2 3.2 0 0 1 6.4 0v2.5" fill="none" stroke="#d0d0d0" stroke-width="1.6"/><rect x="792" y="398.0" width="10" height="7.5" rx="0.5" fill="#d0d0d0"/><rect x="820" y="393" width="5" height="3.5" fill="#00f07c" stroke="#111" stroke-width="0.7"/><rect x="817" y="396.5" width="11" height="6" fill="#000"/><rect x="819" y="398.5" width="7" height="1.2" fill="#fff"/><rect x="819" y="401" width="7" height="2.5" fill="#00f07c" stroke="#111" stroke-width="0.5"/><path d="M843 395.5h10M843 401h10M846 392v12M850 392v12" stroke="#777" stroke-width="1.5"/><path d="M723 561.5l6.5 6.5M729.5 561.5l-6.5 6.5" stroke="#333" stroke-width="1.6"/><rect x="725.5" y="581.8" width="4.8" height="4" fill="#888" stroke="#333" stroke-width="1.1"/><rect x="723.3" y="584.3" width="5" height="4.4" fill="#e8e8e8" stroke="#333" stroke-width="1.1"/><path d="M1065 757.5h8M1065 760.5h8M1065 763.5h8" stroke="#aaa" stroke-width="1"/><g font-family="Liberation Serif" font-size="11.5" fill="#111"><text x="967.80" y="309.5" text-anchor="middle">H</text><text x="973.40" y="309.5" text-anchor="middle">i</text><text x="979.00" y="309.5" text-anchor="middle">g</text><text x="984.60" y="309.5" text-anchor="middle">h</text><text x="990.20" y="309.5" text-anchor="middle">l</text><text x="995.80" y="309.5" text-anchor="middle">i</text><text x="1001.40" y="309.5" text-anchor="middle">g</text><text x="1007.00" y="309.5" text-anchor="middle">h</text><text x="1012.60" y="309.5" text-anchor="middle">t</text><text x="1021.10" y="309.5" textLength="5.4" lengthAdjust="spacingAndGlyphs">M</text><text x="1029.40" y="309.5" text-anchor="middle">o</text><text x="1035.00" y="309.5" text-anchor="middle">d</text><text x="1040.60" y="309.5" text-anchor="middle">e</text></g><g font-family="Liberation Serif" font-size="11.5" fill="#111"><text x="933.00" y="544" text-anchor="middle">P</text><text x="938.60" y="544" text-anchor="middle">e</text><text x="944.20" y="544" text-anchor="middle">n</text><text x="955.40" y="544" text-anchor="middle">P</text><text x="961.00" y="544" text-anchor="middle">a</text><text x="966.60" y="544" text-anchor="middle">l</text><text x="972.20" y="544" text-anchor="middle">e</text><text x="977.80" y="544" text-anchor="middle">t</text><text x="983.40" y="544" text-anchor="middle">t</text><text x="989.00" y="544" text-anchor="middle">e</text></g><g font-family="Liberation Serif" font-size="11.5" fill="#111"><text x="1015.80" y="545" text-anchor="middle">L</text><text x="1021.40" y="545" text-anchor="middle">a</text><text x="1027.00" y="545" text-anchor="middle">y</text><text x="1032.60" y="545" text-anchor="middle">e</text><text x="1038.20" y="545" text-anchor="middle">r</text><text x="1049.40" y="545" text-anchor="middle">T</text><text x="1055.00" y="545" text-anchor="middle">r</text><text x="1060.60" y="545" text-anchor="middle">e</text><text x="1066.20" y="545" text-anchor="middle">e</text></g></svg>
</body></html>
